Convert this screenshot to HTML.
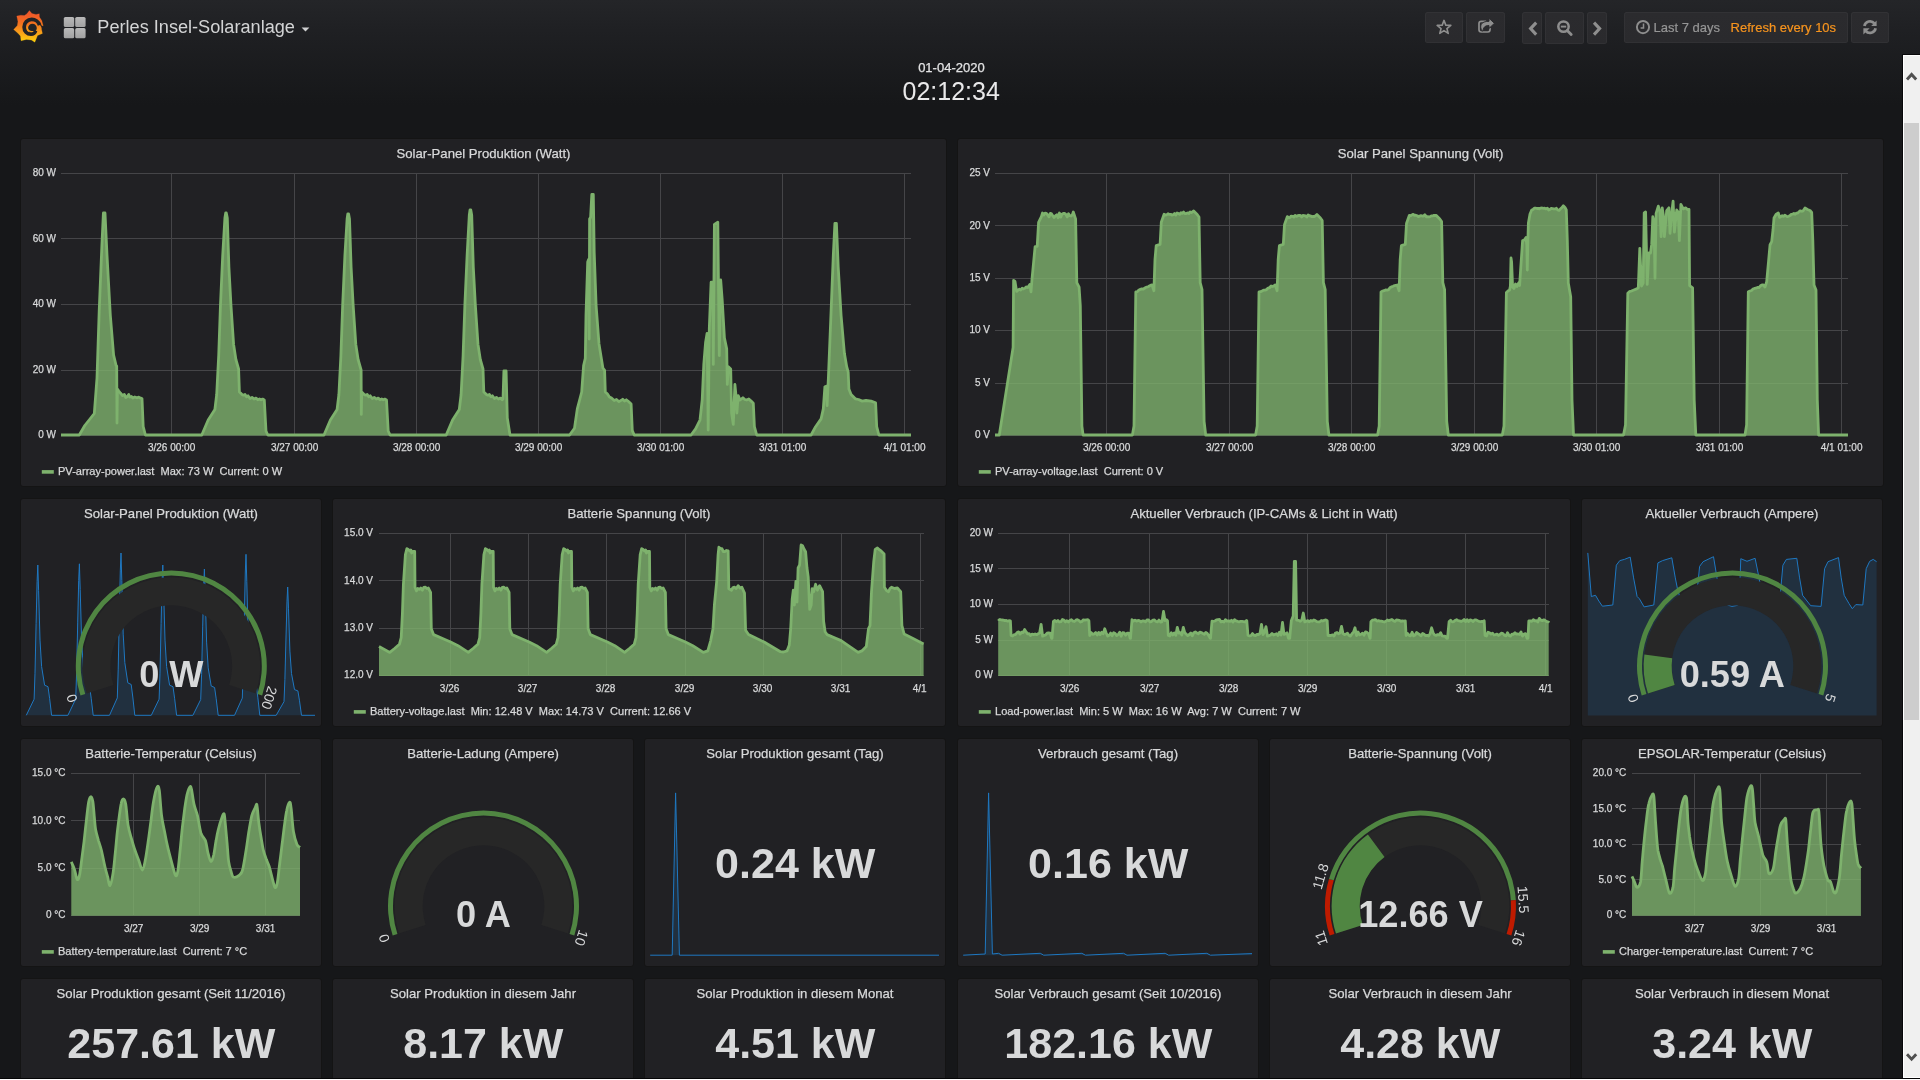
<!DOCTYPE html>
<html><head><meta charset="utf-8"><title>Perles Insel-Solaranlage</title>
<style>
html,body{margin:0;padding:0}
html{overflow:hidden}
body{width:1920px;height:1080px;overflow:hidden;position:relative;background:#161719;font-family:"Liberation Sans",sans-serif;}
#w{position:absolute;left:0;top:0;width:1920px;height:1080px;overflow:hidden}
#bg{position:absolute;left:0;top:0;width:1920px;height:140px;background:linear-gradient(to bottom,#242528 0,#1f2023 30px,#161719 105px)}
.p{position:absolute;background:#212124;border-radius:3px;border:1px solid #141414;box-sizing:border-box}
.t{position:absolute;white-space:pre;font-family:"Liberation Sans",sans-serif}
#tx{position:absolute;left:0;top:0;width:1920px;height:1080px;will-change:transform}
#g{position:absolute;left:0;top:0;will-change:transform}
.b{position:absolute;border-radius:2.5px;background:linear-gradient(to bottom,#2b2b2e,#2a2a2d);box-shadow:inset 0 0 0 1px rgba(255,255,255,0.035)}
#sb{position:absolute;left:1903px;top:55px;width:17px;height:1023px;background:#f0f0f0;border-left:1px solid #fff;border-bottom:1px solid #fff;border-top:1px solid #fff;box-sizing:border-box}
#tl{position:absolute;left:1902px;top:54px;width:18px;height:1px;background:#08080a}
#th{position:absolute;left:1904px;top:123px;width:15px;height:597px;background:#cdcdcd}
#vl{position:absolute;left:1902px;top:55px;width:1px;height:1023px;background:#08080a}
#bl{position:absolute;left:0;top:1078px;width:1920px;height:1px;background:#050506}
#wl{position:absolute;left:0;top:1079px;width:1920px;height:1px;background:#fff}
</style></head>
<body>
<div id="w">
<div id="bg"></div>
<div class="p" style="left:20px;top:138px;width:927px;height:349px"></div>
<div class="p" style="left:957px;top:138px;width:927px;height:349px"></div>
<div class="p" style="left:20px;top:498px;width:302px;height:229px"></div>
<div class="p" style="left:332px;top:498px;width:614px;height:229px"></div>
<div class="p" style="left:957px;top:498px;width:614px;height:229px"></div>
<div class="p" style="left:1581px;top:498px;width:302px;height:229px"></div>
<div class="p" style="left:20px;top:738px;width:302px;height:229px"></div>
<div class="p" style="left:332px;top:738px;width:302px;height:229px"></div>
<div class="p" style="left:644px;top:738px;width:302px;height:229px"></div>
<div class="p" style="left:957px;top:738px;width:302px;height:229px"></div>
<div class="p" style="left:1269px;top:738px;width:302px;height:229px"></div>
<div class="p" style="left:1581px;top:738px;width:302px;height:229px"></div>
<div class="p" style="left:20px;top:978px;width:302px;height:122px"></div>
<div class="p" style="left:332px;top:978px;width:302px;height:122px"></div>
<div class="p" style="left:644px;top:978px;width:302px;height:122px"></div>
<div class="p" style="left:957px;top:978px;width:302px;height:122px"></div>
<div class="p" style="left:1269px;top:978px;width:302px;height:122px"></div>
<div class="p" style="left:1581px;top:978px;width:302px;height:122px"></div>
<svg id="g" width="1920" height="1080" viewBox="0 0 1920 1080">
<path d="M61 173.5H911M61 238.5H911M61 304.5H911M61 370.5H911M61 435.5H911M171.5 173V435M294.5 173V435M416.5 173V435M538.5 173V435M660.5 173V435M782.5 173V435M904.5 173V435" stroke="#454548" stroke-width="1" fill="none" shape-rendering="crispEdges"/>
<path d="M61 435 L79.3 435 L84.8 425.5 L94.3 413.5 L97 378 L99.2 311 L101.9 245 L103.4 213 L105 213 L107 255 L110.3 315 L113.6 355 L116.1 365.5 L116.7 366 L117 423 L117.4 389 L118.8 391 L120.3 393 L122.5 395.5 L124.3 394.5 L125.8 397.5 L127.3 396.5 L128.7 394.5 L129.8 397 L131.4 396.5 L132.8 398 L134.8 397 L136.8 397.8 L138.8 397.2 L140.8 398.2 L142 398.5 L143.2 426.5 L145.4 435 L201.8 435 L208.2 420 L214.9 409.5 L216.7 394.5 L218.7 355.6 L220.5 304.4 L222.7 255.6 L224.9 218 L225.7 213 L226.3 213 L227.3 218 L228.9 267 L230.9 304.4 L233.6 344.4 L235.9 359.5 L238.6 369 L239.4 392 L240.5 393 L242 394.5 L243.4 395.2 L245 394.4 L246.5 396.8 L248 395.8 L250 398.5 L252 397.4 L254 399 L256 398.1 L257.8 399.8 L259.5 399 L261 399.8 L262.6 399.1 L264.3 400 L266 431 L267.8 435 L324 435 L330.4 420 L337.1 409.5 L338.9 394.5 L340.9 355.6 L342.7 304.4 L344.9 255.6 L347.1 219 L347.8 214 L348.6 214 L349.5 219 L351.1 267 L353.1 304.4 L355.8 344.4 L358.1 359.5 L360.8 369 L361.1 370 L361.3 414.4 L361.7 392 L362.7 393 L364.2 394.5 L365.6 395.2 L367.2 394.4 L368.7 396.8 L370.2 395.8 L372.2 398.5 L374.2 397.4 L376.2 399 L378.2 398.1 L380 399.8 L381.7 399 L383.2 399.8 L384.8 399.1 L386.5 400 L388.2 431 L390 435 L446.2 435 L452.6 420 L459.3 409.5 L461.1 394.5 L463.1 355.6 L464.9 304.4 L467.1 255.6 L469.3 215 L470 210 L470.8 210 L471.7 215 L473.3 267 L475.3 304.4 L478 344.4 L480.3 359.5 L483 369 L483.8 392 L484.9 393 L486.4 394.5 L487.8 395.2 L489.4 394.4 L490.9 396.8 L492.4 395.8 L494.4 398.5 L496.4 397.4 L498.4 399 L500.4 398.1 L502.2 399.8 L503 399 L503.9 371 L506.1 371 L507.3 418 L510 435 L569.6 435 L574.5 428.2 L577.3 408.9 L581.7 392 L583.6 365.5 L585.3 358.3 L586 315 L587.7 262 L588.6 259.5 L589.2 339 L589.6 219 L590.6 217.3 L591.8 194.5 L593.3 194.5 L594.2 252.3 L596.1 305.3 L599 343.9 L602.9 368 L604.6 370.4 L605.3 392 L607.5 394 L609.4 396.9 L611.5 398 L614.2 400.5 L616.5 399.5 L619 401.7 L622.7 399.3 L624.5 401 L626.3 399.8 L628.5 401.5 L631.1 404.1 L632.3 430.6 L634.2 435 L691.1 435 L695.6 428.9 L700 420 L702.2 400 L703.8 364.4 L705.6 342.2 L707.1 333.3 L708.2 430 L709.3 328.9 L711.1 282.2 L712.7 282.2 L713.3 364.4 L714.4 224.4 L717.8 222.2 L718.4 277.8 L719.3 355.6 L720.7 280 L722.2 300 L724.4 337.8 L726.7 348.9 L727.3 384.4 L728.4 366.7 L730.7 368.9 L731.6 413.3 L733.3 424.4 L734.9 384.4 L736 395.6 L736.9 413 L738.2 395.6 L740 400 L742.9 397.8 L744.8 399.5 L746.7 400 L748.8 399 L751.1 401.1 L753.3 403.3 L754.4 426.7 L756.7 435 L811.1 435 L815.6 426.7 L821.1 418.9 L823.3 408.9 L824.9 386.7 L826.2 386.2 L827.1 405.6 L828.4 377.8 L831.1 311.1 L833.3 255.6 L834.9 223.3 L836.4 223.3 L838.2 266.7 L841.1 315.6 L844.4 353.3 L846.7 366.7 L848.2 372.2 L848.9 388.9 L851.1 394.4 L855.6 398.9 L858.5 399.5 L862.2 401.1 L866 400.5 L871.1 401.1 L875.6 402.7 L876.7 426.7 L878.9 435 L911 435 L911 435.5 L61 435.5 Z" fill="rgba(126,178,109,0.8)" stroke="none"/>
<path d="M61 435 L79.3 435 L84.8 425.5 L94.3 413.5 L97 378 L99.2 311 L101.9 245 L103.4 213 L105 213 L107 255 L110.3 315 L113.6 355 L116.1 365.5 L116.7 366 L117 423 L117.4 389 L118.8 391 L120.3 393 L122.5 395.5 L124.3 394.5 L125.8 397.5 L127.3 396.5 L128.7 394.5 L129.8 397 L131.4 396.5 L132.8 398 L134.8 397 L136.8 397.8 L138.8 397.2 L140.8 398.2 L142 398.5 L143.2 426.5 L145.4 435 L201.8 435 L208.2 420 L214.9 409.5 L216.7 394.5 L218.7 355.6 L220.5 304.4 L222.7 255.6 L224.9 218 L225.7 213 L226.3 213 L227.3 218 L228.9 267 L230.9 304.4 L233.6 344.4 L235.9 359.5 L238.6 369 L239.4 392 L240.5 393 L242 394.5 L243.4 395.2 L245 394.4 L246.5 396.8 L248 395.8 L250 398.5 L252 397.4 L254 399 L256 398.1 L257.8 399.8 L259.5 399 L261 399.8 L262.6 399.1 L264.3 400 L266 431 L267.8 435 L324 435 L330.4 420 L337.1 409.5 L338.9 394.5 L340.9 355.6 L342.7 304.4 L344.9 255.6 L347.1 219 L347.8 214 L348.6 214 L349.5 219 L351.1 267 L353.1 304.4 L355.8 344.4 L358.1 359.5 L360.8 369 L361.1 370 L361.3 414.4 L361.7 392 L362.7 393 L364.2 394.5 L365.6 395.2 L367.2 394.4 L368.7 396.8 L370.2 395.8 L372.2 398.5 L374.2 397.4 L376.2 399 L378.2 398.1 L380 399.8 L381.7 399 L383.2 399.8 L384.8 399.1 L386.5 400 L388.2 431 L390 435 L446.2 435 L452.6 420 L459.3 409.5 L461.1 394.5 L463.1 355.6 L464.9 304.4 L467.1 255.6 L469.3 215 L470 210 L470.8 210 L471.7 215 L473.3 267 L475.3 304.4 L478 344.4 L480.3 359.5 L483 369 L483.8 392 L484.9 393 L486.4 394.5 L487.8 395.2 L489.4 394.4 L490.9 396.8 L492.4 395.8 L494.4 398.5 L496.4 397.4 L498.4 399 L500.4 398.1 L502.2 399.8 L503 399 L503.9 371 L506.1 371 L507.3 418 L510 435 L569.6 435 L574.5 428.2 L577.3 408.9 L581.7 392 L583.6 365.5 L585.3 358.3 L586 315 L587.7 262 L588.6 259.5 L589.2 339 L589.6 219 L590.6 217.3 L591.8 194.5 L593.3 194.5 L594.2 252.3 L596.1 305.3 L599 343.9 L602.9 368 L604.6 370.4 L605.3 392 L607.5 394 L609.4 396.9 L611.5 398 L614.2 400.5 L616.5 399.5 L619 401.7 L622.7 399.3 L624.5 401 L626.3 399.8 L628.5 401.5 L631.1 404.1 L632.3 430.6 L634.2 435 L691.1 435 L695.6 428.9 L700 420 L702.2 400 L703.8 364.4 L705.6 342.2 L707.1 333.3 L708.2 430 L709.3 328.9 L711.1 282.2 L712.7 282.2 L713.3 364.4 L714.4 224.4 L717.8 222.2 L718.4 277.8 L719.3 355.6 L720.7 280 L722.2 300 L724.4 337.8 L726.7 348.9 L727.3 384.4 L728.4 366.7 L730.7 368.9 L731.6 413.3 L733.3 424.4 L734.9 384.4 L736 395.6 L736.9 413 L738.2 395.6 L740 400 L742.9 397.8 L744.8 399.5 L746.7 400 L748.8 399 L751.1 401.1 L753.3 403.3 L754.4 426.7 L756.7 435 L811.1 435 L815.6 426.7 L821.1 418.9 L823.3 408.9 L824.9 386.7 L826.2 386.2 L827.1 405.6 L828.4 377.8 L831.1 311.1 L833.3 255.6 L834.9 223.3 L836.4 223.3 L838.2 266.7 L841.1 315.6 L844.4 353.3 L846.7 366.7 L848.2 372.2 L848.9 388.9 L851.1 394.4 L855.6 398.9 L858.5 399.5 L862.2 401.1 L866 400.5 L871.1 401.1 L875.6 402.7 L876.7 426.7 L878.9 435 L911 435" fill="none" stroke="#7eb26d" stroke-width="2.8" stroke-linejoin="round" stroke-linecap="butt"/>
<rect x="41.8" y="470.1" width="12" height="3.6" fill="#7eb26d"/>
<path d="M995 173.5H1848M995 225.5H1848M995 278.5H1848M995 330.5H1848M995 383.5H1848M995 435.5H1848M1106.5 173V435M1229.5 173V435M1351.5 173V435M1474.5 173V435M1596.5 173V435M1719.5 173V435M1841.5 173V435" stroke="#454548" stroke-width="1" fill="none" shape-rendering="crispEdges"/>
<path d="M995 435 L999.3 435 L1013.1 347.4 L1013.6 280.3 L1015 281.4 L1016.6 291.4 L1018 290.1 L1019.4 289.2 L1020.8 290 L1022.2 288.2 L1023.6 288.9 L1025 288.1 L1026.4 286.9 L1027.8 287.6 L1029.8 284.4 L1031 291.9 L1032.1 278 L1035.1 246.7 L1037.2 246.3 L1038.6 222.4 L1041.4 216.6 L1042.5 213 L1043.8 215 L1045.1 213.1 L1046.4 213.3 L1047.7 214.9 L1049 216.9 L1050.3 213.4 L1051.6 213.9 L1052.9 215.9 L1054.2 217.5 L1055.5 215.7 L1056.8 214.8 L1058.1 217.7 L1059.4 213 L1060.7 217.1 L1062 214.2 L1063.3 213.5 L1064.6 213.4 L1065.9 214.3 L1067.2 216.9 L1068.5 213.7 L1069.8 215.7 L1071.1 216 L1072.4 214.7 L1073.3 212 L1075.6 218.9 L1076.8 282.6 L1079.1 287.2 L1080.3 305.7 L1081.9 426.1 L1083.1 435 L1132.4 435 L1134 426 L1135.8 291.9 L1137.4 291.6 L1138.9 290 L1140.4 289.4 L1141.9 288.9 L1143.4 289.1 L1144.9 288 L1146.4 287.1 L1147.9 286.9 L1149.4 286 L1150.9 285.1 L1152 284.9 L1153.9 290.7 L1155 259.4 L1156.2 245.6 L1160.1 244.4 L1161.3 222.3 L1164.1 214.3 L1165.4 215 L1166.7 214.8 L1168 213.7 L1169.3 214.4 L1170.6 214.3 L1171.9 215.1 L1173.2 214.7 L1174.5 213.5 L1175.8 215.1 L1177.1 213 L1178.4 213.6 L1179.7 214.3 L1181 212.7 L1182.3 213.4 L1183.6 212.1 L1184.9 213.5 L1186.2 213.6 L1187.5 212.9 L1188.8 213.5 L1190.1 211.9 L1191.4 212.6 L1193.7 211 L1197.2 214.5 L1199 217 L1200.2 282.6 L1202 289.5 L1204.1 421.5 L1205.7 435 L1255.6 435 L1257.2 426 L1259 291.9 L1260.6 291.7 L1262.1 291 L1263.6 290.1 L1265.1 290.1 L1266.6 289.6 L1268.1 288.1 L1269.6 287.7 L1271.1 286 L1272.6 286.5 L1274.1 285.7 L1275.2 284.9 L1277.1 290.7 L1278.2 259.4 L1279.4 245.6 L1283.3 244.4 L1284.5 224.6 L1287.3 216.6 L1288.6 217.8 L1289.9 217.4 L1291.2 216.1 L1292.5 216.3 L1293.8 217 L1295.1 215.4 L1296.4 216.4 L1297.7 215.7 L1299 215.5 L1300.3 215.3 L1301.6 217 L1302.9 215.4 L1304.2 215.6 L1305.5 215.9 L1306.8 217 L1308.1 215 L1309.4 215.8 L1310.7 216 L1312 216.7 L1313.3 216.4 L1314.6 216.5 L1316.9 214.5 L1320.4 218 L1322.2 220.5 L1323.4 282.6 L1325.2 289.5 L1327.3 421.5 L1328.9 435 L1377.6 435 L1379.2 426 L1381 291.9 L1382.6 291.1 L1384.1 290.7 L1385.6 289.9 L1387.1 290.2 L1388.6 289.6 L1390.1 287.5 L1391.6 286.9 L1393.1 286.3 L1394.6 285.6 L1396.1 285.4 L1397.2 284.9 L1399.1 290.7 L1400.2 259.4 L1401.4 245.6 L1405.3 244.4 L1406.5 223.5 L1409.3 215.5 L1410.6 215.7 L1411.9 214.9 L1413.2 214.3 L1414.5 215.3 L1415.8 215.2 L1417.1 215.7 L1418.4 216.7 L1419.7 216.1 L1421 215.7 L1422.3 216 L1423.6 216.2 L1424.9 214.7 L1426.2 216.8 L1427.5 216.6 L1428.8 216.9 L1430.1 216.7 L1431.4 215.8 L1432.7 215.9 L1434 215.3 L1436.3 215.5 L1439.8 219 L1441.6 221.5 L1442.8 282.6 L1444.6 289.5 L1446.7 421.5 L1448.3 435 L1502.3 435 L1504 426 L1506.4 292.5 L1508 291 L1509.6 290 L1510.4 286 L1511 258 L1511.6 262 L1512.6 287 L1514 288.5 L1515.5 284 L1517 286.5 L1518.6 283 L1519.6 285.5 L1520.6 270 L1522.6 240.5 L1524.3 240 L1526 237.5 L1526.8 245 L1527.3 270 L1527.9 240 L1528.4 223 L1530 214 L1531.7 210 L1533 209.5 L1534.3 208.1 L1535.6 208.2 L1536.9 208.5 L1538.2 208.4 L1539.5 208.8 L1540.8 208.1 L1542.1 208 L1543.4 208.4 L1544.7 208.2 L1546 208.9 L1547.3 208.1 L1548.6 210.1 L1549.9 209.5 L1551.2 208.4 L1552.5 208.6 L1553.8 208.8 L1555.1 208.9 L1556.4 208.3 L1557.7 210 L1559 210.4 L1560.3 209.1 L1562 207.5 L1563.3 205.8 L1565 207.5 L1566.3 210 L1567.3 240 L1568.3 283 L1570.7 296.7 L1572 400 L1573.5 435 L1623.5 435 L1625.5 425 L1627.8 293.3 L1629.4 291.7 L1631.5 291 L1633.9 290 L1636.7 288.9 L1638.3 287.8 L1639.8 248.3 L1641.5 286 L1643.2 283 L1644.2 213 L1645.6 212 L1647.2 284.4 L1648.9 252.8 L1650.5 253 L1651.7 244.4 L1652.8 216.7 L1654 222 L1655 278.3 L1656.1 213.3 L1658.3 206.1 L1660 212 L1661.1 236.7 L1662.2 207.8 L1663.3 215 L1664.4 236.7 L1666.7 210.6 L1668.9 207.8 L1670 233.3 L1671.5 215 L1673.1 201.1 L1674.4 232.2 L1676.7 210 L1678.2 212 L1679.4 240.6 L1680.9 204.4 L1683.3 208.9 L1685.6 207.8 L1687.4 209.5 L1689 209.4 L1689.6 285.6 L1692.6 287.8 L1694.2 400 L1695.8 435 L1745 435 L1746.6 425 L1748.3 291.7 L1750 291 L1751.5 290.5 L1753 289.1 L1754.5 288.4 L1756 288.2 L1757.5 287.4 L1759 287.7 L1760.5 285.8 L1762 284.9 L1763.3 285 L1765 287 L1766.7 281.7 L1768.5 262 L1770 245 L1771.7 241.7 L1773 230 L1774 218 L1776 214.5 L1778.3 213 L1779.6 217.4 L1780.9 216.5 L1782.2 215.7 L1783.5 216.4 L1784.8 215.2 L1786.1 216.1 L1787.4 216.7 L1788.7 216.2 L1790 215.6 L1791.3 214.4 L1792.6 214.2 L1793.9 213.4 L1795.2 214.2 L1796.5 213.2 L1797.8 213.1 L1799.1 211.6 L1800.4 210.8 L1801.7 211.3 L1803 211 L1805 208 L1807.5 209.5 L1810 210.5 L1811.7 212.5 L1812.8 240 L1814 285 L1816 290 L1817.3 400 L1818.6 435 L1848 435 L1848 435.5 L995 435.5 Z" fill="rgba(126,178,109,0.8)" stroke="none"/>
<path d="M995 435 L999.3 435 L1013.1 347.4 L1013.6 280.3 L1015 281.4 L1016.6 291.4 L1018 290.1 L1019.4 289.2 L1020.8 290 L1022.2 288.2 L1023.6 288.9 L1025 288.1 L1026.4 286.9 L1027.8 287.6 L1029.8 284.4 L1031 291.9 L1032.1 278 L1035.1 246.7 L1037.2 246.3 L1038.6 222.4 L1041.4 216.6 L1042.5 213 L1043.8 215 L1045.1 213.1 L1046.4 213.3 L1047.7 214.9 L1049 216.9 L1050.3 213.4 L1051.6 213.9 L1052.9 215.9 L1054.2 217.5 L1055.5 215.7 L1056.8 214.8 L1058.1 217.7 L1059.4 213 L1060.7 217.1 L1062 214.2 L1063.3 213.5 L1064.6 213.4 L1065.9 214.3 L1067.2 216.9 L1068.5 213.7 L1069.8 215.7 L1071.1 216 L1072.4 214.7 L1073.3 212 L1075.6 218.9 L1076.8 282.6 L1079.1 287.2 L1080.3 305.7 L1081.9 426.1 L1083.1 435 L1132.4 435 L1134 426 L1135.8 291.9 L1137.4 291.6 L1138.9 290 L1140.4 289.4 L1141.9 288.9 L1143.4 289.1 L1144.9 288 L1146.4 287.1 L1147.9 286.9 L1149.4 286 L1150.9 285.1 L1152 284.9 L1153.9 290.7 L1155 259.4 L1156.2 245.6 L1160.1 244.4 L1161.3 222.3 L1164.1 214.3 L1165.4 215 L1166.7 214.8 L1168 213.7 L1169.3 214.4 L1170.6 214.3 L1171.9 215.1 L1173.2 214.7 L1174.5 213.5 L1175.8 215.1 L1177.1 213 L1178.4 213.6 L1179.7 214.3 L1181 212.7 L1182.3 213.4 L1183.6 212.1 L1184.9 213.5 L1186.2 213.6 L1187.5 212.9 L1188.8 213.5 L1190.1 211.9 L1191.4 212.6 L1193.7 211 L1197.2 214.5 L1199 217 L1200.2 282.6 L1202 289.5 L1204.1 421.5 L1205.7 435 L1255.6 435 L1257.2 426 L1259 291.9 L1260.6 291.7 L1262.1 291 L1263.6 290.1 L1265.1 290.1 L1266.6 289.6 L1268.1 288.1 L1269.6 287.7 L1271.1 286 L1272.6 286.5 L1274.1 285.7 L1275.2 284.9 L1277.1 290.7 L1278.2 259.4 L1279.4 245.6 L1283.3 244.4 L1284.5 224.6 L1287.3 216.6 L1288.6 217.8 L1289.9 217.4 L1291.2 216.1 L1292.5 216.3 L1293.8 217 L1295.1 215.4 L1296.4 216.4 L1297.7 215.7 L1299 215.5 L1300.3 215.3 L1301.6 217 L1302.9 215.4 L1304.2 215.6 L1305.5 215.9 L1306.8 217 L1308.1 215 L1309.4 215.8 L1310.7 216 L1312 216.7 L1313.3 216.4 L1314.6 216.5 L1316.9 214.5 L1320.4 218 L1322.2 220.5 L1323.4 282.6 L1325.2 289.5 L1327.3 421.5 L1328.9 435 L1377.6 435 L1379.2 426 L1381 291.9 L1382.6 291.1 L1384.1 290.7 L1385.6 289.9 L1387.1 290.2 L1388.6 289.6 L1390.1 287.5 L1391.6 286.9 L1393.1 286.3 L1394.6 285.6 L1396.1 285.4 L1397.2 284.9 L1399.1 290.7 L1400.2 259.4 L1401.4 245.6 L1405.3 244.4 L1406.5 223.5 L1409.3 215.5 L1410.6 215.7 L1411.9 214.9 L1413.2 214.3 L1414.5 215.3 L1415.8 215.2 L1417.1 215.7 L1418.4 216.7 L1419.7 216.1 L1421 215.7 L1422.3 216 L1423.6 216.2 L1424.9 214.7 L1426.2 216.8 L1427.5 216.6 L1428.8 216.9 L1430.1 216.7 L1431.4 215.8 L1432.7 215.9 L1434 215.3 L1436.3 215.5 L1439.8 219 L1441.6 221.5 L1442.8 282.6 L1444.6 289.5 L1446.7 421.5 L1448.3 435 L1502.3 435 L1504 426 L1506.4 292.5 L1508 291 L1509.6 290 L1510.4 286 L1511 258 L1511.6 262 L1512.6 287 L1514 288.5 L1515.5 284 L1517 286.5 L1518.6 283 L1519.6 285.5 L1520.6 270 L1522.6 240.5 L1524.3 240 L1526 237.5 L1526.8 245 L1527.3 270 L1527.9 240 L1528.4 223 L1530 214 L1531.7 210 L1533 209.5 L1534.3 208.1 L1535.6 208.2 L1536.9 208.5 L1538.2 208.4 L1539.5 208.8 L1540.8 208.1 L1542.1 208 L1543.4 208.4 L1544.7 208.2 L1546 208.9 L1547.3 208.1 L1548.6 210.1 L1549.9 209.5 L1551.2 208.4 L1552.5 208.6 L1553.8 208.8 L1555.1 208.9 L1556.4 208.3 L1557.7 210 L1559 210.4 L1560.3 209.1 L1562 207.5 L1563.3 205.8 L1565 207.5 L1566.3 210 L1567.3 240 L1568.3 283 L1570.7 296.7 L1572 400 L1573.5 435 L1623.5 435 L1625.5 425 L1627.8 293.3 L1629.4 291.7 L1631.5 291 L1633.9 290 L1636.7 288.9 L1638.3 287.8 L1639.8 248.3 L1641.5 286 L1643.2 283 L1644.2 213 L1645.6 212 L1647.2 284.4 L1648.9 252.8 L1650.5 253 L1651.7 244.4 L1652.8 216.7 L1654 222 L1655 278.3 L1656.1 213.3 L1658.3 206.1 L1660 212 L1661.1 236.7 L1662.2 207.8 L1663.3 215 L1664.4 236.7 L1666.7 210.6 L1668.9 207.8 L1670 233.3 L1671.5 215 L1673.1 201.1 L1674.4 232.2 L1676.7 210 L1678.2 212 L1679.4 240.6 L1680.9 204.4 L1683.3 208.9 L1685.6 207.8 L1687.4 209.5 L1689 209.4 L1689.6 285.6 L1692.6 287.8 L1694.2 400 L1695.8 435 L1745 435 L1746.6 425 L1748.3 291.7 L1750 291 L1751.5 290.5 L1753 289.1 L1754.5 288.4 L1756 288.2 L1757.5 287.4 L1759 287.7 L1760.5 285.8 L1762 284.9 L1763.3 285 L1765 287 L1766.7 281.7 L1768.5 262 L1770 245 L1771.7 241.7 L1773 230 L1774 218 L1776 214.5 L1778.3 213 L1779.6 217.4 L1780.9 216.5 L1782.2 215.7 L1783.5 216.4 L1784.8 215.2 L1786.1 216.1 L1787.4 216.7 L1788.7 216.2 L1790 215.6 L1791.3 214.4 L1792.6 214.2 L1793.9 213.4 L1795.2 214.2 L1796.5 213.2 L1797.8 213.1 L1799.1 211.6 L1800.4 210.8 L1801.7 211.3 L1803 211 L1805 208 L1807.5 209.5 L1810 210.5 L1811.7 212.5 L1812.8 240 L1814 285 L1816 290 L1817.3 400 L1818.6 435 L1848 435" fill="none" stroke="#7eb26d" stroke-width="2.8" stroke-linejoin="round" stroke-linecap="butt"/>
<rect x="978.8" y="470.1" width="12" height="3.6" fill="#7eb26d"/>
<path d="M379 533.5H924M379 580.5H924M379 628.5H924M379 675.5H924M450.5 533V675.5M528.5 533V675.5M606.5 533V675.5M685.5 533V675.5M763.5 533V675.5M841.5 533V675.5M920.5 533V675.5" stroke="#454548" stroke-width="1" fill="none" shape-rendering="crispEdges"/>
<path d="M379 646.5 L389.8 652.4 L394.6 648.5 L399.4 644.3 L401.2 637.6 L402.4 613.9 L403.4 584.3 L405.4 554.6 L406.9 548.7 L408.3 549.5 L409.8 551 L410.8 550 L411.7 553 L412.8 551.4 L414.7 551.4 L415 587.2 L416.5 590.9 L417.8 588.5 L419.4 589.4 L420.8 588 L422.4 590.2 L423.8 587.5 L425.4 587.2 L426.8 588.5 L428.3 588 L430.6 592.4 L431.3 628.7 L433.5 634.6 L450.6 642 L458 645.7 L468.3 652.4 L473.1 648.5 L477.9 644.3 L479.7 637.6 L480.9 613.9 L481.9 584.3 L483.9 554.6 L485.4 548.7 L486.8 549.5 L488.3 551 L489.3 550 L490.2 553 L491.3 551.4 L493.2 551.4 L493.5 587.2 L495 590.9 L496.3 588.5 L497.9 589.4 L499.3 588 L500.9 590.2 L502.3 587.5 L503.9 587.2 L505.3 588.5 L506.8 588 L509.1 592.4 L509.8 628.7 L512 634.6 L529.1 642 L536.5 645.7 L546.6 652.4 L551.4 648.5 L556.2 644.3 L558 637.6 L559.2 613.9 L560.2 584.3 L562.2 554.6 L563.7 548.7 L565.1 549.5 L566.6 551 L567.6 550 L568.5 553 L569.6 551.4 L571.5 551.4 L571.8 587.2 L573.3 590.9 L574.6 588.5 L576.2 589.4 L577.6 588 L579.2 590.2 L580.6 587.5 L582.2 587.2 L583.6 588.5 L585.1 588 L587.4 592.4 L588.1 628.7 L590.3 634.6 L607.4 642 L614.8 645.7 L624.6 652.4 L629.4 648.5 L634.2 644.3 L636 637.6 L637.2 613.9 L638.2 584.3 L640.2 554.6 L641.7 548.7 L643.1 549.5 L644.6 551 L645.6 550 L646.5 553 L647.6 551.4 L649.5 551.4 L649.8 587.2 L651.3 590.9 L652.6 588.5 L654.2 589.4 L655.6 588 L657.2 590.2 L658.6 587.5 L660.2 587.2 L661.6 588.5 L663.1 588 L665.4 592.4 L666.1 628.7 L668.3 634.6 L685.4 642 L692.8 645.7 L703.3 652.4 L707.8 650.9 L710.7 640.6 L713 628.7 L714.4 605 L716.7 581.3 L718.1 554.6 L718.9 547.2 L720.4 548.5 L721.9 548.7 L723.3 551.5 L724.8 551.7 L726.5 550.5 L728.2 550.9 L728.8 588.7 L731.5 590.2 L733 587.5 L734.4 587.2 L736.2 588.5 L738.1 585.7 L740 588 L741.9 587.2 L744.5 593.1 L745.6 630.2 L748.5 634.6 L764.1 642 L780.4 651.7 L783.5 652 L787 650.9 L789.3 645 L790.7 628.7 L792.2 599.1 L793.3 590.2 L794.4 605 L795.9 581.3 L797 602 L798.1 568 L799.6 565 L801.1 545 L802.6 545.7 L804 549 L805.6 551.7 L807 568 L808.2 576.9 L809.7 609.4 L811.2 605 L812.2 588.7 L813.7 591.7 L815.6 584.3 L817.4 590.2 L819.6 585.7 L822.6 591.7 L823.6 621.3 L825.1 631.7 L827 634.6 L841.1 640.6 L858.1 652.4 L861.9 650.9 L866.3 646.5 L868.5 628.7 L870 625.7 L871.5 591.7 L873.7 562 L875.2 549.4 L877.4 548 L879 549.5 L881.1 550.9 L884.1 553.9 L884.4 587.2 L886.5 590.5 L888.5 591.7 L890 588.5 L891.5 587.2 L894.5 588.5 L897.4 588 L900.7 591.7 L901.9 625.7 L904.1 633.9 L914 639 L923.6 644 L923.6 676 L379 676 Z" fill="rgba(126,178,109,0.8)" stroke="none"/>
<path d="M379 646.5 L389.8 652.4 L394.6 648.5 L399.4 644.3 L401.2 637.6 L402.4 613.9 L403.4 584.3 L405.4 554.6 L406.9 548.7 L408.3 549.5 L409.8 551 L410.8 550 L411.7 553 L412.8 551.4 L414.7 551.4 L415 587.2 L416.5 590.9 L417.8 588.5 L419.4 589.4 L420.8 588 L422.4 590.2 L423.8 587.5 L425.4 587.2 L426.8 588.5 L428.3 588 L430.6 592.4 L431.3 628.7 L433.5 634.6 L450.6 642 L458 645.7 L468.3 652.4 L473.1 648.5 L477.9 644.3 L479.7 637.6 L480.9 613.9 L481.9 584.3 L483.9 554.6 L485.4 548.7 L486.8 549.5 L488.3 551 L489.3 550 L490.2 553 L491.3 551.4 L493.2 551.4 L493.5 587.2 L495 590.9 L496.3 588.5 L497.9 589.4 L499.3 588 L500.9 590.2 L502.3 587.5 L503.9 587.2 L505.3 588.5 L506.8 588 L509.1 592.4 L509.8 628.7 L512 634.6 L529.1 642 L536.5 645.7 L546.6 652.4 L551.4 648.5 L556.2 644.3 L558 637.6 L559.2 613.9 L560.2 584.3 L562.2 554.6 L563.7 548.7 L565.1 549.5 L566.6 551 L567.6 550 L568.5 553 L569.6 551.4 L571.5 551.4 L571.8 587.2 L573.3 590.9 L574.6 588.5 L576.2 589.4 L577.6 588 L579.2 590.2 L580.6 587.5 L582.2 587.2 L583.6 588.5 L585.1 588 L587.4 592.4 L588.1 628.7 L590.3 634.6 L607.4 642 L614.8 645.7 L624.6 652.4 L629.4 648.5 L634.2 644.3 L636 637.6 L637.2 613.9 L638.2 584.3 L640.2 554.6 L641.7 548.7 L643.1 549.5 L644.6 551 L645.6 550 L646.5 553 L647.6 551.4 L649.5 551.4 L649.8 587.2 L651.3 590.9 L652.6 588.5 L654.2 589.4 L655.6 588 L657.2 590.2 L658.6 587.5 L660.2 587.2 L661.6 588.5 L663.1 588 L665.4 592.4 L666.1 628.7 L668.3 634.6 L685.4 642 L692.8 645.7 L703.3 652.4 L707.8 650.9 L710.7 640.6 L713 628.7 L714.4 605 L716.7 581.3 L718.1 554.6 L718.9 547.2 L720.4 548.5 L721.9 548.7 L723.3 551.5 L724.8 551.7 L726.5 550.5 L728.2 550.9 L728.8 588.7 L731.5 590.2 L733 587.5 L734.4 587.2 L736.2 588.5 L738.1 585.7 L740 588 L741.9 587.2 L744.5 593.1 L745.6 630.2 L748.5 634.6 L764.1 642 L780.4 651.7 L783.5 652 L787 650.9 L789.3 645 L790.7 628.7 L792.2 599.1 L793.3 590.2 L794.4 605 L795.9 581.3 L797 602 L798.1 568 L799.6 565 L801.1 545 L802.6 545.7 L804 549 L805.6 551.7 L807 568 L808.2 576.9 L809.7 609.4 L811.2 605 L812.2 588.7 L813.7 591.7 L815.6 584.3 L817.4 590.2 L819.6 585.7 L822.6 591.7 L823.6 621.3 L825.1 631.7 L827 634.6 L841.1 640.6 L858.1 652.4 L861.9 650.9 L866.3 646.5 L868.5 628.7 L870 625.7 L871.5 591.7 L873.7 562 L875.2 549.4 L877.4 548 L879 549.5 L881.1 550.9 L884.1 553.9 L884.4 587.2 L886.5 590.5 L888.5 591.7 L890 588.5 L891.5 587.2 L894.5 588.5 L897.4 588 L900.7 591.7 L901.9 625.7 L904.1 633.9 L914 639 L923.6 644" fill="none" stroke="#7eb26d" stroke-width="2.8" stroke-linejoin="round" stroke-linecap="butt"/>
<rect x="353.8" y="710.1" width="12" height="3.6" fill="#7eb26d"/>
<path d="M998 533.5H1549M998 568.5H1549M998 604.5H1549M998 640.5H1549M998 675.5H1549M1069.5 533V675.5M1149.5 533V675.5M1228.5 533V675.5M1307.5 533V675.5M1386.5 533V675.5M1465.5 533V675.5M1545.5 533V675.5" stroke="#454548" stroke-width="1" fill="none" shape-rendering="crispEdges"/>
<path d="M998.2 619 L998.8 619.6 L1000.3 619.7 L1001.8 620 L1003.3 620.2 L1004.8 620.7 L1006.3 620.4 L1007.8 621.2 L1009.3 620.6 L1010.4 620.8 L1011.1 635.5 L1012.6 636 L1014.1 634.7 L1015.6 634.5 L1017.1 632.5 L1018.6 631.9 L1020.1 634.1 L1021.6 632.1 L1023.1 632.6 L1024.6 629.5 L1026.1 631.9 L1027.6 633.8 L1029.1 633.7 L1030.6 635.5 L1032.1 634.1 L1033.6 634.6 L1035.1 634 L1036.6 634.7 L1038.1 633.8 L1039.6 633 L1041.1 624.3 L1042.6 636.2 L1044.1 635.5 L1045.6 634.9 L1047.1 633.2 L1048.6 632.8 L1050.1 633.1 L1051.6 638.3 L1052 638.3 L1053.4 621.5 L1054.9 620.5 L1056.4 621.7 L1057.9 620.5 L1059.4 622 L1060.9 621.7 L1062.4 619.5 L1063.9 620 L1065.4 621.9 L1066.9 620.7 L1068.4 622 L1069.9 620.5 L1071.4 619.7 L1072.9 621.1 L1074.4 621.5 L1075.9 620.2 L1077.4 619.7 L1078.9 620.4 L1080.4 622 L1081.9 621.5 L1083.4 619.8 L1084.9 620.1 L1086.4 619.8 L1087.9 619.7 L1088.9 620.8 L1089.7 635.5 L1091.2 632.6 L1092.7 634.3 L1094.2 633.8 L1095.7 632.6 L1097.2 635 L1098.7 632.4 L1100.2 634.6 L1101.7 632.3 L1103.2 633.7 L1104.7 628.8 L1106.2 633 L1107.7 636.1 L1109.2 635.3 L1110.7 633.1 L1112.2 635.7 L1113.7 632.7 L1115.2 633.5 L1116.7 635.6 L1118.2 634.6 L1119.7 632.2 L1121.2 636.2 L1122.7 632.7 L1124.2 632.9 L1125.7 635.2 L1127.2 633.2 L1128.7 633.1 L1130.2 638.3 L1130.5 638.3 L1132 619.7 L1133.5 621 L1135 620.1 L1136.5 621.1 L1138 620.5 L1139.5 620.7 L1141 622 L1142.5 620.8 L1144 621 L1145.5 621.8 L1147 620 L1148.5 619.9 L1150 621.9 L1151.5 621.6 L1153 620.1 L1154.5 620 L1156 621.4 L1157.5 621.9 L1159 620 L1160.5 622 L1162 621.8 L1163.5 611.5 L1165 620.6 L1166.5 619.8 L1167.5 620.8 L1168.3 635.5 L1169.8 636 L1171.3 632.8 L1172.8 634.9 L1174.3 632.9 L1175.8 635.4 L1177.3 627.3 L1178.8 633.1 L1180.3 632.6 L1181.8 635 L1183.3 627.3 L1184.8 632.8 L1186.3 634.3 L1187.8 635.6 L1189.3 634.5 L1190.8 633 L1192.3 635.8 L1193.8 632.7 L1195.3 631.9 L1196.8 633 L1198.3 633.8 L1199.8 632.1 L1201.3 632.6 L1202.8 633.4 L1204.3 634.3 L1205.8 632.4 L1207.3 633.4 L1208.8 635.7 L1210.3 638.3 L1210.5 638.3 L1212 621.2 L1213.5 621.3 L1215 621 L1216.5 619.9 L1218 619.6 L1219.5 619.5 L1221 621.9 L1222.5 621.3 L1224 622 L1225.5 619.6 L1227 621.2 L1228.5 620.8 L1230 621.4 L1231.5 620.3 L1233 622.1 L1234.5 619.7 L1236 620.9 L1237.5 621.4 L1239 621.8 L1240.5 621.4 L1242 621.3 L1243.5 621.6 L1245 621.9 L1246.5 620.4 L1246.8 620.8 L1248 635.5 L1249.5 635.8 L1251 635.6 L1252.5 633.6 L1254 635.3 L1255.5 635.6 L1257 634.3 L1258.5 634.5 L1260 633.5 L1261.5 624.3 L1263 634.5 L1264.5 632.2 L1266 626.6 L1267.5 636.2 L1269 635.7 L1270.5 635 L1272 633.5 L1273.5 635 L1275 634.4 L1276.5 633.7 L1278 635.5 L1279.5 632.2 L1281 635.1 L1282.5 622.3 L1284 634.4 L1285.5 633.9 L1287 632.8 L1288.5 638.3 L1289.7 638.3 L1291.3 620.8 L1293.2 616.1 L1294.3 561.4 L1295.6 561.4 L1296.6 620 L1298.8 620.3 L1300.3 621.3 L1301.8 620 L1303.3 613 L1304.8 621.9 L1306.3 621.2 L1307.8 620.6 L1309.3 621.8 L1310.8 620.4 L1312.3 621.2 L1313.8 620 L1315.3 620.6 L1316.8 621.6 L1318.3 621.9 L1319.8 621.8 L1321.3 620.5 L1322.8 621 L1324.3 620.3 L1325.8 619.9 L1327.2 620.8 L1328 635.5 L1329.5 635.5 L1331 635.5 L1332.5 634.9 L1334 636 L1335.5 633 L1337 632.5 L1338.5 633.8 L1340 633 L1341.5 626.3 L1343 633.6 L1344.5 634.6 L1346 634 L1347.5 633.2 L1349 635.5 L1350.5 636.1 L1352 633.8 L1353.5 632.1 L1355 627.8 L1356.5 635.6 L1358 632 L1359.5 634.9 L1361 634.3 L1362.5 633.2 L1364 635.3 L1365.5 631.9 L1367 632.4 L1368.5 633.8 L1370 638.3 L1370.2 638.3 L1370.9 621.7 L1372.4 620.1 L1373.9 619.9 L1375.4 619.6 L1376.9 621.1 L1378.4 620.7 L1379.9 621.1 L1381.4 621.2 L1382.9 621.6 L1384.4 622 L1385.9 621.3 L1387.4 620 L1388.9 620.7 L1390.4 620 L1391.9 619.5 L1393.4 620.7 L1394.9 621.4 L1396.4 620 L1397.9 620.2 L1399.4 620.4 L1400.9 621.3 L1402.4 620.9 L1403.9 621.1 L1405.3 620.8 L1406.1 635.5 L1407.6 633.5 L1409.1 635.3 L1410.6 635.8 L1412.1 632.2 L1413.6 635.9 L1415.1 635 L1416.6 632.4 L1418.1 633.8 L1419.6 634.6 L1421.1 635.8 L1422.6 633.5 L1424.1 634.3 L1425.6 635.7 L1427.1 635.3 L1428.6 636 L1430.1 633.8 L1431.6 627.8 L1433.1 632.7 L1434.6 635 L1436.1 635.4 L1437.6 634.6 L1439.1 635 L1440.6 632.7 L1442.1 635.8 L1443.6 636.1 L1445.1 636.1 L1446.6 638.3 L1447.5 638.3 L1449.1 621.6 L1450.6 620.3 L1452.1 621.9 L1453.6 621.7 L1455.1 620.4 L1456.6 619.7 L1458.1 620.6 L1459.6 620.9 L1461.1 621.5 L1462.6 620.8 L1464.1 619.6 L1465.6 621.6 L1467.1 619.7 L1468.6 621.6 L1470.1 619.9 L1471.6 620.4 L1473.1 621.5 L1474.6 619.9 L1476.1 619.9 L1477.6 620.8 L1479.1 621.4 L1480.6 621.7 L1482.1 621.3 L1483.6 622 L1484.2 620.8 L1485 635.5 L1486.5 636 L1488 632.2 L1489.5 632.8 L1491 634.1 L1492.5 633.1 L1494 635 L1495.5 634.6 L1497 634.1 L1498.5 635.5 L1500 634.3 L1501.5 633.2 L1503 633.5 L1504.5 635.5 L1506 635.8 L1507.5 632.7 L1509 635.5 L1510.5 636.1 L1512 634.1 L1513.5 634.3 L1515 632.7 L1516.5 634.2 L1518 634 L1519.5 634.5 L1521 631.9 L1522.5 636.1 L1524 634.1 L1525.5 633.6 L1527 638.3 L1528 638.3 L1528.8 621 L1530.3 620.8 L1531.8 621.3 L1533.3 619.7 L1534.8 620.9 L1536.3 620.6 L1537.8 622 L1539.3 618.4 L1540.8 620.2 L1542.3 620.7 L1543.8 619.8 L1545.3 620.6 L1546.8 621.6 L1548.3 621.8 L1548.7 620.8 L1548.7 676 L998.2 676 Z" fill="rgba(126,178,109,0.8)" stroke="none"/>
<path d="M998.2 619 L998.8 619.6 L1000.3 619.7 L1001.8 620 L1003.3 620.2 L1004.8 620.7 L1006.3 620.4 L1007.8 621.2 L1009.3 620.6 L1010.4 620.8 L1011.1 635.5 L1012.6 636 L1014.1 634.7 L1015.6 634.5 L1017.1 632.5 L1018.6 631.9 L1020.1 634.1 L1021.6 632.1 L1023.1 632.6 L1024.6 629.5 L1026.1 631.9 L1027.6 633.8 L1029.1 633.7 L1030.6 635.5 L1032.1 634.1 L1033.6 634.6 L1035.1 634 L1036.6 634.7 L1038.1 633.8 L1039.6 633 L1041.1 624.3 L1042.6 636.2 L1044.1 635.5 L1045.6 634.9 L1047.1 633.2 L1048.6 632.8 L1050.1 633.1 L1051.6 638.3 L1052 638.3 L1053.4 621.5 L1054.9 620.5 L1056.4 621.7 L1057.9 620.5 L1059.4 622 L1060.9 621.7 L1062.4 619.5 L1063.9 620 L1065.4 621.9 L1066.9 620.7 L1068.4 622 L1069.9 620.5 L1071.4 619.7 L1072.9 621.1 L1074.4 621.5 L1075.9 620.2 L1077.4 619.7 L1078.9 620.4 L1080.4 622 L1081.9 621.5 L1083.4 619.8 L1084.9 620.1 L1086.4 619.8 L1087.9 619.7 L1088.9 620.8 L1089.7 635.5 L1091.2 632.6 L1092.7 634.3 L1094.2 633.8 L1095.7 632.6 L1097.2 635 L1098.7 632.4 L1100.2 634.6 L1101.7 632.3 L1103.2 633.7 L1104.7 628.8 L1106.2 633 L1107.7 636.1 L1109.2 635.3 L1110.7 633.1 L1112.2 635.7 L1113.7 632.7 L1115.2 633.5 L1116.7 635.6 L1118.2 634.6 L1119.7 632.2 L1121.2 636.2 L1122.7 632.7 L1124.2 632.9 L1125.7 635.2 L1127.2 633.2 L1128.7 633.1 L1130.2 638.3 L1130.5 638.3 L1132 619.7 L1133.5 621 L1135 620.1 L1136.5 621.1 L1138 620.5 L1139.5 620.7 L1141 622 L1142.5 620.8 L1144 621 L1145.5 621.8 L1147 620 L1148.5 619.9 L1150 621.9 L1151.5 621.6 L1153 620.1 L1154.5 620 L1156 621.4 L1157.5 621.9 L1159 620 L1160.5 622 L1162 621.8 L1163.5 611.5 L1165 620.6 L1166.5 619.8 L1167.5 620.8 L1168.3 635.5 L1169.8 636 L1171.3 632.8 L1172.8 634.9 L1174.3 632.9 L1175.8 635.4 L1177.3 627.3 L1178.8 633.1 L1180.3 632.6 L1181.8 635 L1183.3 627.3 L1184.8 632.8 L1186.3 634.3 L1187.8 635.6 L1189.3 634.5 L1190.8 633 L1192.3 635.8 L1193.8 632.7 L1195.3 631.9 L1196.8 633 L1198.3 633.8 L1199.8 632.1 L1201.3 632.6 L1202.8 633.4 L1204.3 634.3 L1205.8 632.4 L1207.3 633.4 L1208.8 635.7 L1210.3 638.3 L1210.5 638.3 L1212 621.2 L1213.5 621.3 L1215 621 L1216.5 619.9 L1218 619.6 L1219.5 619.5 L1221 621.9 L1222.5 621.3 L1224 622 L1225.5 619.6 L1227 621.2 L1228.5 620.8 L1230 621.4 L1231.5 620.3 L1233 622.1 L1234.5 619.7 L1236 620.9 L1237.5 621.4 L1239 621.8 L1240.5 621.4 L1242 621.3 L1243.5 621.6 L1245 621.9 L1246.5 620.4 L1246.8 620.8 L1248 635.5 L1249.5 635.8 L1251 635.6 L1252.5 633.6 L1254 635.3 L1255.5 635.6 L1257 634.3 L1258.5 634.5 L1260 633.5 L1261.5 624.3 L1263 634.5 L1264.5 632.2 L1266 626.6 L1267.5 636.2 L1269 635.7 L1270.5 635 L1272 633.5 L1273.5 635 L1275 634.4 L1276.5 633.7 L1278 635.5 L1279.5 632.2 L1281 635.1 L1282.5 622.3 L1284 634.4 L1285.5 633.9 L1287 632.8 L1288.5 638.3 L1289.7 638.3 L1291.3 620.8 L1293.2 616.1 L1294.3 561.4 L1295.6 561.4 L1296.6 620 L1298.8 620.3 L1300.3 621.3 L1301.8 620 L1303.3 613 L1304.8 621.9 L1306.3 621.2 L1307.8 620.6 L1309.3 621.8 L1310.8 620.4 L1312.3 621.2 L1313.8 620 L1315.3 620.6 L1316.8 621.6 L1318.3 621.9 L1319.8 621.8 L1321.3 620.5 L1322.8 621 L1324.3 620.3 L1325.8 619.9 L1327.2 620.8 L1328 635.5 L1329.5 635.5 L1331 635.5 L1332.5 634.9 L1334 636 L1335.5 633 L1337 632.5 L1338.5 633.8 L1340 633 L1341.5 626.3 L1343 633.6 L1344.5 634.6 L1346 634 L1347.5 633.2 L1349 635.5 L1350.5 636.1 L1352 633.8 L1353.5 632.1 L1355 627.8 L1356.5 635.6 L1358 632 L1359.5 634.9 L1361 634.3 L1362.5 633.2 L1364 635.3 L1365.5 631.9 L1367 632.4 L1368.5 633.8 L1370 638.3 L1370.2 638.3 L1370.9 621.7 L1372.4 620.1 L1373.9 619.9 L1375.4 619.6 L1376.9 621.1 L1378.4 620.7 L1379.9 621.1 L1381.4 621.2 L1382.9 621.6 L1384.4 622 L1385.9 621.3 L1387.4 620 L1388.9 620.7 L1390.4 620 L1391.9 619.5 L1393.4 620.7 L1394.9 621.4 L1396.4 620 L1397.9 620.2 L1399.4 620.4 L1400.9 621.3 L1402.4 620.9 L1403.9 621.1 L1405.3 620.8 L1406.1 635.5 L1407.6 633.5 L1409.1 635.3 L1410.6 635.8 L1412.1 632.2 L1413.6 635.9 L1415.1 635 L1416.6 632.4 L1418.1 633.8 L1419.6 634.6 L1421.1 635.8 L1422.6 633.5 L1424.1 634.3 L1425.6 635.7 L1427.1 635.3 L1428.6 636 L1430.1 633.8 L1431.6 627.8 L1433.1 632.7 L1434.6 635 L1436.1 635.4 L1437.6 634.6 L1439.1 635 L1440.6 632.7 L1442.1 635.8 L1443.6 636.1 L1445.1 636.1 L1446.6 638.3 L1447.5 638.3 L1449.1 621.6 L1450.6 620.3 L1452.1 621.9 L1453.6 621.7 L1455.1 620.4 L1456.6 619.7 L1458.1 620.6 L1459.6 620.9 L1461.1 621.5 L1462.6 620.8 L1464.1 619.6 L1465.6 621.6 L1467.1 619.7 L1468.6 621.6 L1470.1 619.9 L1471.6 620.4 L1473.1 621.5 L1474.6 619.9 L1476.1 619.9 L1477.6 620.8 L1479.1 621.4 L1480.6 621.7 L1482.1 621.3 L1483.6 622 L1484.2 620.8 L1485 635.5 L1486.5 636 L1488 632.2 L1489.5 632.8 L1491 634.1 L1492.5 633.1 L1494 635 L1495.5 634.6 L1497 634.1 L1498.5 635.5 L1500 634.3 L1501.5 633.2 L1503 633.5 L1504.5 635.5 L1506 635.8 L1507.5 632.7 L1509 635.5 L1510.5 636.1 L1512 634.1 L1513.5 634.3 L1515 632.7 L1516.5 634.2 L1518 634 L1519.5 634.5 L1521 631.9 L1522.5 636.1 L1524 634.1 L1525.5 633.6 L1527 638.3 L1528 638.3 L1528.8 621 L1530.3 620.8 L1531.8 621.3 L1533.3 619.7 L1534.8 620.9 L1536.3 620.6 L1537.8 622 L1539.3 618.4 L1540.8 620.2 L1542.3 620.7 L1543.8 619.8 L1545.3 620.6 L1546.8 621.6 L1548.3 621.8 L1548.7 620.8" fill="none" stroke="#7eb26d" stroke-width="2.8" stroke-linejoin="round" stroke-linecap="butt"/>
<rect x="978.8" y="710.1" width="12" height="3.6" fill="#7eb26d"/>
<path d="M71.3 773.5H300M71.3 820.5H300M71.3 868.5H300M71.3 915.5H300M133.5 773.3V915.2M199.5 773.3V915.2M265.5 773.3V915.2" stroke="#454548" stroke-width="1" fill="none" shape-rendering="crispEdges"/>
<path d="M71.3 861.9 C71.8 863.1 73.4 866 74.3 868.9 C75.3 871.7 76.3 878.1 77.1 879.3 C78 880.4 78.7 879.1 79.4 875.8 C80.2 872.5 81 865.4 81.7 859.6 C82.5 853.8 83.3 847.6 84.1 841.1 C84.8 834.5 85.6 826.8 86.4 820.3 C87.1 813.7 87.9 805.7 88.7 801.7 C89.5 797.8 90.3 796.7 91 796.7 C91.7 796.7 92.3 798.6 92.9 801.7 C93.4 804.9 93.8 811 94.2 815.6 C94.7 820.3 94.9 825.3 95.6 829.5 C96.4 833.8 97.7 837.6 98.6 841.1 C99.6 844.6 100.4 846.1 101.4 850.3 C102.5 854.6 103.8 862.1 104.9 866.5 C105.9 871 106.8 873.8 107.7 877 C108.5 880.1 109.1 886.1 110 885.5 C110.9 884.9 112.1 879 113 873.5 C113.9 868 114.5 860 115.3 852.7 C116.1 845.3 116.6 837.6 117.6 829.5 C118.6 821.4 120.1 809.1 121.1 804.1 C122 799 122.6 799 123.4 799 C124.2 799 124.9 799.7 125.7 804.1 C126.5 808.4 127.1 819.1 128 824.9 C129 830.7 130.3 834.5 131.5 838.8 C132.7 843 133.7 846.7 135 850.3 C136.2 854 137.7 857.5 138.9 860.8 C140.1 864 141.3 870.2 142.4 870 C143.5 869.8 144.3 865.2 145.4 859.6 C146.5 854 147.9 843.2 148.9 836.5 C149.8 829.7 150.4 824.9 151.2 819.1 C151.9 813.3 152.5 807 153.5 801.7 C154.4 796.5 156 789.3 157 787.4 C157.9 785.5 158.5 785.5 159.3 790.2 C160 794.9 160.7 808.7 161.6 815.6 C162.5 822.6 163.6 826.8 164.6 831.8 C165.6 836.8 166.2 840.7 167.4 845.7 C168.5 850.7 170.2 857 171.5 861.9 C172.9 866.9 174.4 873.8 175.5 875.3 C176.5 876.9 177 875.3 177.8 871.2 C178.6 867 179.3 857.7 180.1 850.3 C180.9 843 181.6 834.1 182.4 827.2 C183.2 820.3 184 814.1 184.7 808.7 C185.5 803.3 186.2 798.5 187 794.8 C187.9 791.1 189.3 787.5 190.1 786.7 C190.8 785.9 191 787.3 191.7 790.2 C192.3 793.1 193 799.8 194 804.1 C194.9 808.3 196.3 810.8 197.5 815.6 C198.6 820.4 199.6 828.7 200.9 833 C202.3 837.2 204.4 837.8 205.6 841.1 C206.7 844.4 207 849.3 207.9 852.7 C208.8 856.1 209.9 861.1 210.9 861.5 C211.8 861.8 212.8 858.4 213.7 855 C214.5 851.6 215.2 845.3 216 841.1 C216.7 836.8 217.3 833.4 218.3 829.5 C219.2 825.7 220.8 820.6 221.8 817.9 C222.7 815.3 223.5 813 224.1 813.8 C224.6 814.5 224.7 817.6 225.2 822.6 C225.7 827.5 226.5 836.8 227.1 843.4 C227.7 850 228 857.3 228.7 861.9 C229.4 866.5 230.2 868.7 231 871.2 C231.8 873.7 232 876.3 233.3 877 C234.7 877.7 237.6 876.5 239.1 875.3 C240.7 874.2 241.4 874.2 242.6 870 C243.7 865.8 245 856.7 246.1 850.3 C247.1 844 247.9 837.6 248.8 831.8 C249.8 826 250.8 819.7 251.8 815.6 C252.9 811.6 254.5 809.3 255.3 807.5 C256.2 805.8 256.4 802.7 256.9 805.2 C257.5 807.7 258.1 817.2 258.8 822.6 C259.5 828 260.3 833 261.1 837.6 C261.9 842.2 262.5 846.7 263.4 850.3 C264.3 854 265.5 856.9 266.4 859.6 C267.4 862.3 268.2 863.5 269.2 866.5 C270.2 869.6 271.2 874.6 272.2 878.1 C273.2 881.6 274.1 886.6 275 887.4 C275.8 888.1 276.5 886.6 277.3 882.7 C278.1 878.9 278.8 870.4 279.6 864.2 C280.4 858.1 281.2 851.9 281.9 845.7 C282.7 839.5 283.5 833 284.2 827.2 C285 821.4 285.7 815.2 286.6 811 C287.4 806.8 288.8 802.6 289.6 802.2 C290.3 801.8 290.5 803.7 291.2 808.7 C291.8 813.6 292.5 825.8 293.5 831.8 C294.5 837.8 295.9 842 297 844.6 C298.1 847.1 299.5 846.9 300 847.3 L300 915.7 L71.3 915.7 Z" fill="rgba(126,178,109,0.8)" stroke="none"/>
<path d="M71.3 861.9 C71.8 863.1 73.4 866 74.3 868.9 C75.3 871.7 76.3 878.1 77.1 879.3 C78 880.4 78.7 879.1 79.4 875.8 C80.2 872.5 81 865.4 81.7 859.6 C82.5 853.8 83.3 847.6 84.1 841.1 C84.8 834.5 85.6 826.8 86.4 820.3 C87.1 813.7 87.9 805.7 88.7 801.7 C89.5 797.8 90.3 796.7 91 796.7 C91.7 796.7 92.3 798.6 92.9 801.7 C93.4 804.9 93.8 811 94.2 815.6 C94.7 820.3 94.9 825.3 95.6 829.5 C96.4 833.8 97.7 837.6 98.6 841.1 C99.6 844.6 100.4 846.1 101.4 850.3 C102.5 854.6 103.8 862.1 104.9 866.5 C105.9 871 106.8 873.8 107.7 877 C108.5 880.1 109.1 886.1 110 885.5 C110.9 884.9 112.1 879 113 873.5 C113.9 868 114.5 860 115.3 852.7 C116.1 845.3 116.6 837.6 117.6 829.5 C118.6 821.4 120.1 809.1 121.1 804.1 C122 799 122.6 799 123.4 799 C124.2 799 124.9 799.7 125.7 804.1 C126.5 808.4 127.1 819.1 128 824.9 C129 830.7 130.3 834.5 131.5 838.8 C132.7 843 133.7 846.7 135 850.3 C136.2 854 137.7 857.5 138.9 860.8 C140.1 864 141.3 870.2 142.4 870 C143.5 869.8 144.3 865.2 145.4 859.6 C146.5 854 147.9 843.2 148.9 836.5 C149.8 829.7 150.4 824.9 151.2 819.1 C151.9 813.3 152.5 807 153.5 801.7 C154.4 796.5 156 789.3 157 787.4 C157.9 785.5 158.5 785.5 159.3 790.2 C160 794.9 160.7 808.7 161.6 815.6 C162.5 822.6 163.6 826.8 164.6 831.8 C165.6 836.8 166.2 840.7 167.4 845.7 C168.5 850.7 170.2 857 171.5 861.9 C172.9 866.9 174.4 873.8 175.5 875.3 C176.5 876.9 177 875.3 177.8 871.2 C178.6 867 179.3 857.7 180.1 850.3 C180.9 843 181.6 834.1 182.4 827.2 C183.2 820.3 184 814.1 184.7 808.7 C185.5 803.3 186.2 798.5 187 794.8 C187.9 791.1 189.3 787.5 190.1 786.7 C190.8 785.9 191 787.3 191.7 790.2 C192.3 793.1 193 799.8 194 804.1 C194.9 808.3 196.3 810.8 197.5 815.6 C198.6 820.4 199.6 828.7 200.9 833 C202.3 837.2 204.4 837.8 205.6 841.1 C206.7 844.4 207 849.3 207.9 852.7 C208.8 856.1 209.9 861.1 210.9 861.5 C211.8 861.8 212.8 858.4 213.7 855 C214.5 851.6 215.2 845.3 216 841.1 C216.7 836.8 217.3 833.4 218.3 829.5 C219.2 825.7 220.8 820.6 221.8 817.9 C222.7 815.3 223.5 813 224.1 813.8 C224.6 814.5 224.7 817.6 225.2 822.6 C225.7 827.5 226.5 836.8 227.1 843.4 C227.7 850 228 857.3 228.7 861.9 C229.4 866.5 230.2 868.7 231 871.2 C231.8 873.7 232 876.3 233.3 877 C234.7 877.7 237.6 876.5 239.1 875.3 C240.7 874.2 241.4 874.2 242.6 870 C243.7 865.8 245 856.7 246.1 850.3 C247.1 844 247.9 837.6 248.8 831.8 C249.8 826 250.8 819.7 251.8 815.6 C252.9 811.6 254.5 809.3 255.3 807.5 C256.2 805.8 256.4 802.7 256.9 805.2 C257.5 807.7 258.1 817.2 258.8 822.6 C259.5 828 260.3 833 261.1 837.6 C261.9 842.2 262.5 846.7 263.4 850.3 C264.3 854 265.5 856.9 266.4 859.6 C267.4 862.3 268.2 863.5 269.2 866.5 C270.2 869.6 271.2 874.6 272.2 878.1 C273.2 881.6 274.1 886.6 275 887.4 C275.8 888.1 276.5 886.6 277.3 882.7 C278.1 878.9 278.8 870.4 279.6 864.2 C280.4 858.1 281.2 851.9 281.9 845.7 C282.7 839.5 283.5 833 284.2 827.2 C285 821.4 285.7 815.2 286.6 811 C287.4 806.8 288.8 802.6 289.6 802.2 C290.3 801.8 290.5 803.7 291.2 808.7 C291.8 813.6 292.5 825.8 293.5 831.8 C294.5 837.8 295.9 842 297 844.6 C298.1 847.1 299.5 846.9 300 847.3" fill="none" stroke="#7eb26d" stroke-width="2.8" stroke-linejoin="round" stroke-linecap="butt"/>
<rect x="41.8" y="950.1" width="12" height="3.6" fill="#7eb26d"/>
<path d="M1632 773.5H1861M1632 808.5H1861M1632 844.5H1861M1632 879.5H1861M1632 915.5H1861M1694.5 773.3V915.2M1760.5 773.3V915.2M1826.5 773.3V915.2" stroke="#454548" stroke-width="1" fill="none" shape-rendering="crispEdges"/>
<path d="M1632 876.3 C1632.5 877.3 1634 880.9 1634.8 882.7 C1635.6 884.6 1636.1 887.6 1637.1 887.4 C1638.1 887.2 1639.7 885.8 1640.6 881.6 C1641.4 877.3 1641.6 868.7 1642.2 861.9 C1642.8 855.2 1643.4 848 1644.1 841.1 C1644.8 834.1 1645.6 826.4 1646.4 820.3 C1647.1 814.1 1647.7 808.3 1648.7 804.1 C1649.6 799.8 1651.3 796.1 1652.2 794.8 C1653 793.4 1653.4 793.6 1653.8 796 C1654.2 798.3 1654.4 804.2 1654.7 808.7 C1655 813.1 1655.3 817.6 1655.6 822.6 C1656 827.6 1656.4 834.1 1656.8 838.8 C1657.2 843.4 1657.4 846.9 1657.9 850.3 C1658.5 853.8 1659.5 856.9 1660.3 859.6 C1661 862.3 1661.6 863.1 1662.6 866.5 C1663.5 870 1664.9 876 1666 880.4 C1667.2 884.9 1668.4 892 1669.5 893.2 C1670.7 894.3 1672.1 891.4 1673 887.4 C1673.8 883.3 1674 875 1674.6 868.9 C1675.2 862.7 1675.8 857.3 1676.5 850.3 C1677.2 843.4 1678 834.1 1678.8 827.2 C1679.5 820.3 1680.2 813.6 1681.1 808.7 C1682 803.7 1683.2 799.4 1684.1 797.6 C1685 795.7 1685.9 795.5 1686.4 797.6 C1686.9 799.6 1687.1 805.7 1687.3 809.8 C1687.6 814 1687.6 818.1 1688 822.6 C1688.4 827 1689.1 832.2 1689.6 836.5 C1690.2 840.7 1690.7 844.2 1691.5 848 C1692.3 851.9 1693.3 856.1 1694.3 859.6 C1695.2 863.1 1695.9 865.4 1697.3 868.9 C1698.6 872.3 1701 879.7 1702.4 880.4 C1703.7 881.2 1704.6 877.3 1705.4 873.5 C1706.2 869.6 1706.4 862.7 1707 857.3 C1707.6 851.9 1708.2 847.3 1708.9 841.1 C1709.6 834.9 1710.4 826.8 1711.2 820.3 C1711.9 813.7 1712.4 807.1 1713.5 801.7 C1714.6 796.4 1716.6 790.4 1717.7 788.3 C1718.7 786.2 1719.2 786 1719.7 789 C1720.2 792 1720.4 800.8 1720.7 806.4 C1721 812 1721 816.4 1721.6 822.6 C1722.2 828.7 1723.4 836.8 1724.4 843.4 C1725.3 850 1726.2 856.5 1727.4 861.9 C1728.5 867.3 1730 871.7 1731.3 875.8 C1732.6 879.8 1733.8 885.6 1735 886.2 C1736.2 886.8 1737.6 883.7 1738.5 879.3 C1739.4 874.8 1739.7 866.3 1740.3 859.6 C1741 852.8 1741.7 845.9 1742.4 838.8 C1743.1 831.6 1744 823.7 1744.7 816.8 C1745.5 809.8 1746.1 802.2 1747 797.1 C1748 792 1749.6 787.6 1750.5 786.2 C1751.4 784.9 1751.8 785.7 1752.4 789 C1752.9 792.4 1753.3 800.8 1753.8 806.4 C1754.2 812 1754.3 817.6 1755.1 822.6 C1756 827.6 1757.6 832.4 1758.6 836.5 C1759.6 840.5 1760.2 843.6 1760.9 846.9 C1761.7 850.1 1762.3 853.6 1763.2 856.1 C1764.2 858.6 1765.7 859 1766.7 861.9 C1767.7 864.8 1767.9 872.3 1769 873.5 C1770.1 874.6 1772 872.7 1773.2 868.9 C1774.4 865 1775.1 855.7 1776 850.3 C1776.8 844.9 1777.5 840.7 1778.3 836.5 C1779.1 832.2 1779.6 827.7 1780.6 824.9 C1781.6 822.1 1783.2 820.8 1784.1 819.8 C1784.9 818.8 1785.3 817.1 1785.7 819.1 C1786.1 821.1 1786.3 827.4 1786.6 831.8 C1786.9 836.3 1787.1 840.3 1787.5 845.7 C1788 851.1 1788.6 858.4 1789.2 864.2 C1789.7 870 1790.3 876.4 1791 880.4 C1791.7 884.5 1792.6 886.4 1793.3 888.5 C1794.1 890.6 1794.5 893.2 1795.6 893.2 C1796.8 893.2 1798.9 891 1800.3 888.5 C1801.6 886 1802.8 882 1803.7 878.1 C1804.7 874.3 1805.3 870 1806.1 865.4 C1806.8 860.8 1807.6 856.3 1808.4 850.3 C1809.1 844.4 1809.9 835.9 1810.7 829.5 C1811.5 823.1 1811.9 815.4 1813 812.2 C1814.1 808.9 1816.2 810 1817.2 809.8 C1818.1 809.6 1818.3 807.9 1818.8 811 C1819.2 814.1 1819.6 822.6 1819.9 828.4 C1820.3 834.1 1820.6 840.7 1821.1 845.7 C1821.6 850.7 1822.1 854.6 1822.7 858.4 C1823.3 862.3 1823.7 865.2 1824.6 868.9 C1825.5 872.5 1827.1 878.3 1828 880.4 C1829 882.5 1829.4 879.7 1830.4 881.6 C1831.3 883.5 1832.9 890.3 1833.8 892 C1834.8 893.7 1835.4 893.2 1836.1 892 C1836.8 890.8 1837.4 887.8 1838 885.1 C1838.6 882.4 1839.1 880.4 1839.6 875.8 C1840.2 871.2 1840.7 863.5 1841.2 857.3 C1841.8 851.1 1842.5 844.6 1843.1 838.8 C1843.7 833 1844.4 827.2 1844.9 822.6 C1845.5 817.9 1845.7 814.5 1846.6 811 C1847.4 807.5 1849.1 802.9 1850 801.7 C1850.9 800.6 1851.3 800.6 1851.9 804.1 C1852.4 807.5 1852.8 816.4 1853.3 822.6 C1853.7 828.7 1854.1 835.7 1854.7 841.1 C1855.2 846.5 1855.9 851.1 1856.5 855 C1857.1 858.8 1857.4 862 1858.1 864.2 C1858.9 866.4 1860.4 867.5 1860.9 868.2 L1860.9 915.7 L1632 915.7 Z" fill="rgba(126,178,109,0.8)" stroke="none"/>
<path d="M1632 876.3 C1632.5 877.3 1634 880.9 1634.8 882.7 C1635.6 884.6 1636.1 887.6 1637.1 887.4 C1638.1 887.2 1639.7 885.8 1640.6 881.6 C1641.4 877.3 1641.6 868.7 1642.2 861.9 C1642.8 855.2 1643.4 848 1644.1 841.1 C1644.8 834.1 1645.6 826.4 1646.4 820.3 C1647.1 814.1 1647.7 808.3 1648.7 804.1 C1649.6 799.8 1651.3 796.1 1652.2 794.8 C1653 793.4 1653.4 793.6 1653.8 796 C1654.2 798.3 1654.4 804.2 1654.7 808.7 C1655 813.1 1655.3 817.6 1655.6 822.6 C1656 827.6 1656.4 834.1 1656.8 838.8 C1657.2 843.4 1657.4 846.9 1657.9 850.3 C1658.5 853.8 1659.5 856.9 1660.3 859.6 C1661 862.3 1661.6 863.1 1662.6 866.5 C1663.5 870 1664.9 876 1666 880.4 C1667.2 884.9 1668.4 892 1669.5 893.2 C1670.7 894.3 1672.1 891.4 1673 887.4 C1673.8 883.3 1674 875 1674.6 868.9 C1675.2 862.7 1675.8 857.3 1676.5 850.3 C1677.2 843.4 1678 834.1 1678.8 827.2 C1679.5 820.3 1680.2 813.6 1681.1 808.7 C1682 803.7 1683.2 799.4 1684.1 797.6 C1685 795.7 1685.9 795.5 1686.4 797.6 C1686.9 799.6 1687.1 805.7 1687.3 809.8 C1687.6 814 1687.6 818.1 1688 822.6 C1688.4 827 1689.1 832.2 1689.6 836.5 C1690.2 840.7 1690.7 844.2 1691.5 848 C1692.3 851.9 1693.3 856.1 1694.3 859.6 C1695.2 863.1 1695.9 865.4 1697.3 868.9 C1698.6 872.3 1701 879.7 1702.4 880.4 C1703.7 881.2 1704.6 877.3 1705.4 873.5 C1706.2 869.6 1706.4 862.7 1707 857.3 C1707.6 851.9 1708.2 847.3 1708.9 841.1 C1709.6 834.9 1710.4 826.8 1711.2 820.3 C1711.9 813.7 1712.4 807.1 1713.5 801.7 C1714.6 796.4 1716.6 790.4 1717.7 788.3 C1718.7 786.2 1719.2 786 1719.7 789 C1720.2 792 1720.4 800.8 1720.7 806.4 C1721 812 1721 816.4 1721.6 822.6 C1722.2 828.7 1723.4 836.8 1724.4 843.4 C1725.3 850 1726.2 856.5 1727.4 861.9 C1728.5 867.3 1730 871.7 1731.3 875.8 C1732.6 879.8 1733.8 885.6 1735 886.2 C1736.2 886.8 1737.6 883.7 1738.5 879.3 C1739.4 874.8 1739.7 866.3 1740.3 859.6 C1741 852.8 1741.7 845.9 1742.4 838.8 C1743.1 831.6 1744 823.7 1744.7 816.8 C1745.5 809.8 1746.1 802.2 1747 797.1 C1748 792 1749.6 787.6 1750.5 786.2 C1751.4 784.9 1751.8 785.7 1752.4 789 C1752.9 792.4 1753.3 800.8 1753.8 806.4 C1754.2 812 1754.3 817.6 1755.1 822.6 C1756 827.6 1757.6 832.4 1758.6 836.5 C1759.6 840.5 1760.2 843.6 1760.9 846.9 C1761.7 850.1 1762.3 853.6 1763.2 856.1 C1764.2 858.6 1765.7 859 1766.7 861.9 C1767.7 864.8 1767.9 872.3 1769 873.5 C1770.1 874.6 1772 872.7 1773.2 868.9 C1774.4 865 1775.1 855.7 1776 850.3 C1776.8 844.9 1777.5 840.7 1778.3 836.5 C1779.1 832.2 1779.6 827.7 1780.6 824.9 C1781.6 822.1 1783.2 820.8 1784.1 819.8 C1784.9 818.8 1785.3 817.1 1785.7 819.1 C1786.1 821.1 1786.3 827.4 1786.6 831.8 C1786.9 836.3 1787.1 840.3 1787.5 845.7 C1788 851.1 1788.6 858.4 1789.2 864.2 C1789.7 870 1790.3 876.4 1791 880.4 C1791.7 884.5 1792.6 886.4 1793.3 888.5 C1794.1 890.6 1794.5 893.2 1795.6 893.2 C1796.8 893.2 1798.9 891 1800.3 888.5 C1801.6 886 1802.8 882 1803.7 878.1 C1804.7 874.3 1805.3 870 1806.1 865.4 C1806.8 860.8 1807.6 856.3 1808.4 850.3 C1809.1 844.4 1809.9 835.9 1810.7 829.5 C1811.5 823.1 1811.9 815.4 1813 812.2 C1814.1 808.9 1816.2 810 1817.2 809.8 C1818.1 809.6 1818.3 807.9 1818.8 811 C1819.2 814.1 1819.6 822.6 1819.9 828.4 C1820.3 834.1 1820.6 840.7 1821.1 845.7 C1821.6 850.7 1822.1 854.6 1822.7 858.4 C1823.3 862.3 1823.7 865.2 1824.6 868.9 C1825.5 872.5 1827.1 878.3 1828 880.4 C1829 882.5 1829.4 879.7 1830.4 881.6 C1831.3 883.5 1832.9 890.3 1833.8 892 C1834.8 893.7 1835.4 893.2 1836.1 892 C1836.8 890.8 1837.4 887.8 1838 885.1 C1838.6 882.4 1839.1 880.4 1839.6 875.8 C1840.2 871.2 1840.7 863.5 1841.2 857.3 C1841.8 851.1 1842.5 844.6 1843.1 838.8 C1843.7 833 1844.4 827.2 1844.9 822.6 C1845.5 817.9 1845.7 814.5 1846.6 811 C1847.4 807.5 1849.1 802.9 1850 801.7 C1850.9 800.6 1851.3 800.6 1851.9 804.1 C1852.4 807.5 1852.8 816.4 1853.3 822.6 C1853.7 828.7 1854.1 835.7 1854.7 841.1 C1855.2 846.5 1855.9 851.1 1856.5 855 C1857.1 858.8 1857.4 862 1858.1 864.2 C1858.9 866.4 1860.4 867.5 1860.9 868.2" fill="none" stroke="#7eb26d" stroke-width="2.8" stroke-linejoin="round" stroke-linecap="butt"/>
<rect x="1602.8" y="950.1" width="12" height="3.6" fill="#7eb26d"/>
<path d="M26.3 715.3 L26.3 715.3 L34.1 699.2 L35 673.2 L36.1 623.6 L37.1 581.5 L37.8 565 L38.6 590.6 L40 640.1 L41.6 666.5 L44.6 685.2 L48 686.7 L49.6 698.3 L51.6 715.3 L67.9 715.3 L75.7 699.1 L76.6 672.9 L77.7 622.9 L78.7 580.5 L79.4 563.8 L80.2 589.6 L81.6 639.5 L83.2 666.1 L86.2 685 L89.6 686.5 L91.2 698.2 L93.2 715.3 L109.5 715.3 L117.3 697.9 L118.2 669.9 L119.3 616.3 L120.3 570.9 L121 553 L121.8 580.6 L123.2 634.1 L124.8 662.6 L127.8 682.8 L131.2 684.5 L132.8 697 L134.8 715.3 L151.3 715.3 L159.1 699.2 L160 673.2 L161.1 623.6 L162.1 581.5 L162.8 565 L163.6 590.6 L165 640.1 L166.6 666.5 L169.6 685.2 L173 686.7 L174.6 698.3 L176.6 715.3 L192.9 715.3 L200.7 699.6 L201.6 674.3 L202.7 626.1 L203.7 585.1 L204.4 569 L205.2 593.9 L206.6 642.1 L208.2 667.8 L211.2 686 L214.6 687.5 L216.2 698.8 L218.2 715.3 L234.5 715.3 L242.3 698.1 L243.2 670.2 L244.3 617.1 L245.3 572 L246 554.3 L246.8 581.7 L248.2 634.8 L249.8 663 L252.8 683.1 L256.2 684.7 L257.8 697.1 L259.8 715.3 L276.2 715.3 L284 701.6 L284.9 679.4 L286 637 L287 601.1 L287.7 587 L288.5 608.8 L289.9 651.1 L291.5 673.6 L294.5 689.6 L297.9 690.9 L299.5 700.8 L301.5 715.3 L315 715.3 L315 715.3 L26.3 715.3 Z" fill="rgba(31,118,189,0.18)" stroke="none"/>
<path d="M26.3 715.3 L26.3 715.3 L34.1 699.2 L35 673.2 L36.1 623.6 L37.1 581.5 L37.8 565 L38.6 590.6 L40 640.1 L41.6 666.5 L44.6 685.2 L48 686.7 L49.6 698.3 L51.6 715.3 L67.9 715.3 L75.7 699.1 L76.6 672.9 L77.7 622.9 L78.7 580.5 L79.4 563.8 L80.2 589.6 L81.6 639.5 L83.2 666.1 L86.2 685 L89.6 686.5 L91.2 698.2 L93.2 715.3 L109.5 715.3 L117.3 697.9 L118.2 669.9 L119.3 616.3 L120.3 570.9 L121 553 L121.8 580.6 L123.2 634.1 L124.8 662.6 L127.8 682.8 L131.2 684.5 L132.8 697 L134.8 715.3 L151.3 715.3 L159.1 699.2 L160 673.2 L161.1 623.6 L162.1 581.5 L162.8 565 L163.6 590.6 L165 640.1 L166.6 666.5 L169.6 685.2 L173 686.7 L174.6 698.3 L176.6 715.3 L192.9 715.3 L200.7 699.6 L201.6 674.3 L202.7 626.1 L203.7 585.1 L204.4 569 L205.2 593.9 L206.6 642.1 L208.2 667.8 L211.2 686 L214.6 687.5 L216.2 698.8 L218.2 715.3 L234.5 715.3 L242.3 698.1 L243.2 670.2 L244.3 617.1 L245.3 572 L246 554.3 L246.8 581.7 L248.2 634.8 L249.8 663 L252.8 683.1 L256.2 684.7 L257.8 697.1 L259.8 715.3 L276.2 715.3 L284 701.6 L284.9 679.4 L286 637 L287 601.1 L287.7 587 L288.5 608.8 L289.9 651.1 L291.5 673.6 L294.5 689.6 L297.9 690.9 L299.5 700.8 L301.5 715.3 L315 715.3" fill="none" stroke="#1f78c1" stroke-width="1" stroke-linejoin="round"/>
<path d="M1587.8 552.9 L1591.3 596.5 L1595.5 595.3 L1598.9 601.1 L1602.4 606.2 L1612.8 605 L1616.3 565.2 L1619.8 560.6 L1624.4 559.4 L1630.2 557.1 L1633.6 577.9 L1637.1 596.5 L1639.4 598.8 L1644.1 606.9 L1653.8 605 L1657.9 562.9 L1662.6 560.6 L1671.8 557.8 L1675.3 577.9 L1677.6 589.5 L1681.1 601.1 L1685.7 606.9 L1695 605.7 L1698 582.6 L1699.6 566.4 L1703.1 561.7 L1713.5 556.7 L1717 577.9 L1720.4 596.5 L1727.4 605 L1732 606.4 L1737.8 605.3 L1740.1 576.8 L1740.8 558.7 L1747 561.3 L1755.1 558.3 L1758.6 575.6 L1762.1 594.1 L1769 605.7 L1778.3 606.4 L1780.6 590.7 L1782.9 565.2 L1786.4 559.4 L1796.8 558.3 L1799.6 577.9 L1802.6 595.3 L1810.7 605.7 L1821.1 606.4 L1824.6 568.7 L1828 561.7 L1838.5 557.6 L1841.2 577.9 L1844.2 595.3 L1848.9 603.4 L1852.3 608.7 L1855.8 604.6 L1862.8 605 L1866.2 568.7 L1869.7 561.3 L1873.2 559.4 L1876.6 561.7 L1876.6 715.6 L1587.8 715.6 Z" fill="rgba(31,118,189,0.18)" stroke="none"/>
<path d="M1587.8 552.9 L1591.3 596.5 L1595.5 595.3 L1598.9 601.1 L1602.4 606.2 L1612.8 605 L1616.3 565.2 L1619.8 560.6 L1624.4 559.4 L1630.2 557.1 L1633.6 577.9 L1637.1 596.5 L1639.4 598.8 L1644.1 606.9 L1653.8 605 L1657.9 562.9 L1662.6 560.6 L1671.8 557.8 L1675.3 577.9 L1677.6 589.5 L1681.1 601.1 L1685.7 606.9 L1695 605.7 L1698 582.6 L1699.6 566.4 L1703.1 561.7 L1713.5 556.7 L1717 577.9 L1720.4 596.5 L1727.4 605 L1732 606.4 L1737.8 605.3 L1740.1 576.8 L1740.8 558.7 L1747 561.3 L1755.1 558.3 L1758.6 575.6 L1762.1 594.1 L1769 605.7 L1778.3 606.4 L1780.6 590.7 L1782.9 565.2 L1786.4 559.4 L1796.8 558.3 L1799.6 577.9 L1802.6 595.3 L1810.7 605.7 L1821.1 606.4 L1824.6 568.7 L1828 561.7 L1838.5 557.6 L1841.2 577.9 L1844.2 595.3 L1848.9 603.4 L1852.3 608.7 L1855.8 604.6 L1862.8 605 L1866.2 568.7 L1869.7 561.3 L1873.2 559.4 L1876.6 561.7" fill="none" stroke="#1f78c1" stroke-width="1" stroke-linejoin="round"/>
<path d="M650.2 955.2 L672.2 955.2 L675.6 792.9 L679.4 955.2 L939 955.2 L939 955.2 L650.2 955.2 Z" fill="rgba(31,118,189,0.18)" stroke="none"/>
<path d="M650.2 955.2 L672.2 955.2 L675.6 792.9 L679.4 955.2 L939 955.2" fill="none" stroke="#1f78c1" stroke-width="1" stroke-linejoin="round"/>
<path d="M963.2 955.2 L985.2 954 L988.6 792.9 L992.4 954 L998.6 953.3 L1002.1 955.2 L1040.3 953.3 L1043.7 955.2 L1081.9 953.3 L1085.4 955.2 L1123.6 953.3 L1127 955.2 L1165.2 953.3 L1168.7 955.2 L1206.9 953.3 L1210.4 955.2 L1252 953.6 L1252 955.2 L963.2 955.2 Z" fill="rgba(31,118,189,0.18)" stroke="none"/>
<path d="M963.2 955.2 L985.2 954 L988.6 792.9 L992.4 954 L998.6 953.3 L1002.1 955.2 L1040.3 953.3 L1043.7 955.2 L1081.9 953.3 L1085.4 955.2 L1123.6 953.3 L1127 955.2 L1165.2 953.3 L1168.7 955.2 L1206.9 953.3 L1210.4 955.2 L1252 953.6" fill="none" stroke="#1f78c1" stroke-width="1" stroke-linejoin="round"/>
<path d="M86.75 693.57 A88.9 88.9 0 1 1 255.85 693.57 L229.12 684.89 A60.8 60.8 0 1 0 113.48 684.89 Z" fill="#272727"/>
<path d="M80.47 695.61 A95.5 95.5 0 1 1 262.13 695.61 L257.37 694.07 A90.5 90.5 0 1 0 85.23 694.07 Z" fill="#508642"/>
<text x="0" y="0" transform="translate(71.91 698.39) rotate(252.00)" text-anchor="middle" dominant-baseline="central" style="font-family:'Liberation Sans',sans-serif;font-size:14px" fill="#d8d9da">0</text>
<text x="0" y="0" transform="translate(269.35 697.96) rotate(468.00)" text-anchor="middle" dominant-baseline="central" style="font-family:'Liberation Sans',sans-serif;font-size:14px" fill="#d8d9da">200</text>
<path d="M1647.95 693.57 A88.9 88.9 0 1 1 1817.05 693.57 L1790.32 684.89 A60.8 60.8 0 1 0 1674.68 684.89 Z" fill="#272727"/>
<path d="M1647.95 693.57 A88.9 88.9 0 0 1 1644.36 654.51 L1672.22 658.18 A60.8 60.8 0 0 0 1674.68 684.89 Z" fill="#508642"/>
<path d="M1641.67 695.61 A95.5 95.5 0 1 1 1823.33 695.61 L1818.57 694.07 A90.5 90.5 0 1 0 1646.43 694.07 Z" fill="#508642"/>
<text x="0" y="0" transform="translate(1633.11 698.39) rotate(252.00)" text-anchor="middle" dominant-baseline="central" style="font-family:'Liberation Sans',sans-serif;font-size:14px" fill="#d8d9da">0</text>
<text x="0" y="0" transform="translate(1830.55 697.96) rotate(468.00)" text-anchor="middle" dominant-baseline="central" style="font-family:'Liberation Sans',sans-serif;font-size:14px" fill="#d8d9da">5</text>
<path d="M398.95 933.57 A88.9 88.9 0 1 1 568.05 933.57 L541.32 924.89 A60.8 60.8 0 1 0 425.68 924.89 Z" fill="#272727"/>
<path d="M392.67 935.61 A95.5 95.5 0 1 1 574.33 935.61 L569.57 934.07 A90.5 90.5 0 1 0 397.43 934.07 Z" fill="#508642"/>
<text x="0" y="0" transform="translate(384.11 938.39) rotate(252.00)" text-anchor="middle" dominant-baseline="central" style="font-family:'Liberation Sans',sans-serif;font-size:14px" fill="#d8d9da">0</text>
<text x="0" y="0" transform="translate(581.55 937.96) rotate(468.00)" text-anchor="middle" dominant-baseline="central" style="font-family:'Liberation Sans',sans-serif;font-size:14px" fill="#d8d9da">10</text>
<path d="M1335.95 933.57 A88.9 88.9 0 1 1 1505.05 933.57 L1478.32 924.89 A60.8 60.8 0 1 0 1362.68 924.89 Z" fill="#272727"/>
<path d="M1335.95 933.57 A88.9 88.9 0 0 1 1367.89 834.44 L1384.52 857.09 A60.8 60.8 0 0 0 1362.68 924.89 Z" fill="#508642"/>
<path d="M1329.67 935.61 A95.5 95.5 0 0 1 1328.96 878.88 L1333.75 880.31 A90.5 90.5 0 0 0 1334.43 934.07 Z" fill="#bf1b00"/>
<path d="M1328.96 878.88 A95.5 95.5 0 0 1 1515.81 900.10 L1510.82 900.42 A90.5 90.5 0 0 0 1333.75 880.31 Z" fill="#508642"/>
<path d="M1515.81 900.10 A95.5 95.5 0 0 1 1511.33 935.61 L1506.57 934.07 A90.5 90.5 0 0 0 1510.82 900.42 Z" fill="#bf1b00"/>
<text x="0" y="0" transform="translate(1321.11 938.39) rotate(252.00)" text-anchor="middle" dominant-baseline="central" style="font-family:'Liberation Sans',sans-serif;font-size:14px" fill="#d8d9da">11</text>
<text x="0" y="0" transform="translate(1320.33 876.32) rotate(286.56)" text-anchor="middle" dominant-baseline="central" style="font-family:'Liberation Sans',sans-serif;font-size:14px" fill="#d8d9da">11.8</text>
<text x="0" y="0" transform="translate(1523.40 899.63) rotate(446.40)" text-anchor="middle" dominant-baseline="central" style="font-family:'Liberation Sans',sans-serif;font-size:14px" fill="#d8d9da">15.5</text>
<text x="0" y="0" transform="translate(1518.55 937.96) rotate(468.00)" text-anchor="middle" dominant-baseline="central" style="font-family:'Liberation Sans',sans-serif;font-size:14px" fill="#d8d9da">16</text>
</svg>
<div id="tx">
<div class="t" style="left:283.50px;width:400px;text-align:center;top:145.75px;font-size:13.14px;line-height:16px;color:#d8d9da;font-weight:normal;-webkit-text-stroke:0.25px;">Solar-Panel Produktion (Watt)</div>
<div class="t" style="left:1220.50px;width:400px;text-align:center;top:145.75px;font-size:13.14px;line-height:16px;color:#d8d9da;font-weight:normal;-webkit-text-stroke:0.25px;">Solar Panel Spannung (Volt)</div>
<div class="t" style="left:-29.00px;width:400px;text-align:center;top:505.75px;font-size:13.14px;line-height:16px;color:#d8d9da;font-weight:normal;-webkit-text-stroke:0.25px;">Solar-Panel Produktion (Watt)</div>
<div class="t" style="left:439.00px;width:400px;text-align:center;top:505.75px;font-size:13.14px;line-height:16px;color:#d8d9da;font-weight:normal;-webkit-text-stroke:0.25px;">Batterie Spannung (Volt)</div>
<div class="t" style="left:1064.00px;width:400px;text-align:center;top:505.75px;font-size:13.14px;line-height:16px;color:#d8d9da;font-weight:normal;-webkit-text-stroke:0.25px;">Aktueller Verbrauch (IP-CAMs &amp; Licht in Watt)</div>
<div class="t" style="left:1532.00px;width:400px;text-align:center;top:505.75px;font-size:13.14px;line-height:16px;color:#d8d9da;font-weight:normal;-webkit-text-stroke:0.25px;">Aktueller Verbrauch (Ampere)</div>
<div class="t" style="left:-29.00px;width:400px;text-align:center;top:745.75px;font-size:13.14px;line-height:16px;color:#d8d9da;font-weight:normal;-webkit-text-stroke:0.25px;">Batterie-Temperatur (Celsius)</div>
<div class="t" style="left:283.00px;width:400px;text-align:center;top:745.75px;font-size:13.14px;line-height:16px;color:#d8d9da;font-weight:normal;-webkit-text-stroke:0.25px;">Batterie-Ladung (Ampere)</div>
<div class="t" style="left:595.00px;width:400px;text-align:center;top:745.75px;font-size:13.14px;line-height:16px;color:#d8d9da;font-weight:normal;-webkit-text-stroke:0.25px;">Solar Produktion gesamt (Tag)</div>
<div class="t" style="left:908.00px;width:400px;text-align:center;top:745.75px;font-size:13.14px;line-height:16px;color:#d8d9da;font-weight:normal;-webkit-text-stroke:0.25px;">Verbrauch gesamt (Tag)</div>
<div class="t" style="left:1220.00px;width:400px;text-align:center;top:745.75px;font-size:13.14px;line-height:16px;color:#d8d9da;font-weight:normal;-webkit-text-stroke:0.25px;">Batterie-Spannung (Volt)</div>
<div class="t" style="left:1532.00px;width:400px;text-align:center;top:745.75px;font-size:13.14px;line-height:16px;color:#d8d9da;font-weight:normal;-webkit-text-stroke:0.25px;">EPSOLAR-Temperatur (Celsius)</div>
<div class="t" style="left:-29.00px;width:400px;text-align:center;top:985.75px;font-size:13.14px;line-height:16px;color:#d8d9da;font-weight:normal;-webkit-text-stroke:0.25px;">Solar Produktion gesamt (Seit 11/2016)</div>
<div class="t" style="left:283.00px;width:400px;text-align:center;top:985.75px;font-size:13.14px;line-height:16px;color:#d8d9da;font-weight:normal;-webkit-text-stroke:0.25px;">Solar Produktion in diesem Jahr</div>
<div class="t" style="left:595.00px;width:400px;text-align:center;top:985.75px;font-size:13.14px;line-height:16px;color:#d8d9da;font-weight:normal;-webkit-text-stroke:0.25px;">Solar Produktion in diesem Monat</div>
<div class="t" style="left:908.00px;width:400px;text-align:center;top:985.75px;font-size:13.14px;line-height:16px;color:#d8d9da;font-weight:normal;-webkit-text-stroke:0.25px;">Solar Verbrauch gesamt (Seit 10/2016)</div>
<div class="t" style="left:1220.00px;width:400px;text-align:center;top:985.75px;font-size:13.14px;line-height:16px;color:#d8d9da;font-weight:normal;-webkit-text-stroke:0.25px;">Solar Verbrauch in diesem Jahr</div>
<div class="t" style="left:1532.00px;width:400px;text-align:center;top:985.75px;font-size:13.14px;line-height:16px;color:#d8d9da;font-weight:normal;-webkit-text-stroke:0.25px;">Solar Verbrauch in diesem Monat</div>
<div class="t" style="right:1864.00px;top:167.44px;font-size:10px;line-height:12px;color:#d8d9da;font-weight:normal;-webkit-text-stroke:0.25px;">80 W</div>
<div class="t" style="right:1864.00px;top:233.44px;font-size:10px;line-height:12px;color:#d8d9da;font-weight:normal;-webkit-text-stroke:0.25px;">60 W</div>
<div class="t" style="right:1864.00px;top:298.44px;font-size:10px;line-height:12px;color:#d8d9da;font-weight:normal;-webkit-text-stroke:0.25px;">40 W</div>
<div class="t" style="right:1864.00px;top:364.44px;font-size:10px;line-height:12px;color:#d8d9da;font-weight:normal;-webkit-text-stroke:0.25px;">20 W</div>
<div class="t" style="right:1864.00px;top:429.44px;font-size:10px;line-height:12px;color:#d8d9da;font-weight:normal;-webkit-text-stroke:0.25px;">0 W</div>
<div class="t" style="left:-28.40px;width:400px;text-align:center;top:442.44px;font-size:10px;line-height:12px;color:#d8d9da;font-weight:normal;-webkit-text-stroke:0.25px;">3/26 00:00</div>
<div class="t" style="left:94.60px;width:400px;text-align:center;top:442.44px;font-size:10px;line-height:12px;color:#d8d9da;font-weight:normal;-webkit-text-stroke:0.25px;">3/27 00:00</div>
<div class="t" style="left:216.60px;width:400px;text-align:center;top:442.44px;font-size:10px;line-height:12px;color:#d8d9da;font-weight:normal;-webkit-text-stroke:0.25px;">3/28 00:00</div>
<div class="t" style="left:338.60px;width:400px;text-align:center;top:442.44px;font-size:10px;line-height:12px;color:#d8d9da;font-weight:normal;-webkit-text-stroke:0.25px;">3/29 00:00</div>
<div class="t" style="left:460.60px;width:400px;text-align:center;top:442.44px;font-size:10px;line-height:12px;color:#d8d9da;font-weight:normal;-webkit-text-stroke:0.25px;">3/30 01:00</div>
<div class="t" style="left:582.60px;width:400px;text-align:center;top:442.44px;font-size:10px;line-height:12px;color:#d8d9da;font-weight:normal;-webkit-text-stroke:0.25px;">3/31 01:00</div>
<div class="t" style="left:704.60px;width:400px;text-align:center;top:442.44px;font-size:10px;line-height:12px;color:#d8d9da;font-weight:normal;-webkit-text-stroke:0.25px;">4/1 01:00</div>
<div class="t" style="left:58.00px;top:465.37px;font-size:11.06px;line-height:13px;color:#d8d9da;font-weight:normal;-webkit-text-stroke:0.25px;">PV-array-power.last  Max: 73 W  Current: 0 W</div>
<div class="t" style="right:930.00px;top:167.44px;font-size:10px;line-height:12px;color:#d8d9da;font-weight:normal;-webkit-text-stroke:0.25px;">25 V</div>
<div class="t" style="right:930.00px;top:220.44px;font-size:10px;line-height:12px;color:#d8d9da;font-weight:normal;-webkit-text-stroke:0.25px;">20 V</div>
<div class="t" style="right:930.00px;top:272.44px;font-size:10px;line-height:12px;color:#d8d9da;font-weight:normal;-webkit-text-stroke:0.25px;">15 V</div>
<div class="t" style="right:930.00px;top:324.44px;font-size:10px;line-height:12px;color:#d8d9da;font-weight:normal;-webkit-text-stroke:0.25px;">10 V</div>
<div class="t" style="right:930.00px;top:377.44px;font-size:10px;line-height:12px;color:#d8d9da;font-weight:normal;-webkit-text-stroke:0.25px;">5 V</div>
<div class="t" style="right:930.00px;top:429.44px;font-size:10px;line-height:12px;color:#d8d9da;font-weight:normal;-webkit-text-stroke:0.25px;">0 V</div>
<div class="t" style="left:906.60px;width:400px;text-align:center;top:442.44px;font-size:10px;line-height:12px;color:#d8d9da;font-weight:normal;-webkit-text-stroke:0.25px;">3/26 00:00</div>
<div class="t" style="left:1029.60px;width:400px;text-align:center;top:442.44px;font-size:10px;line-height:12px;color:#d8d9da;font-weight:normal;-webkit-text-stroke:0.25px;">3/27 00:00</div>
<div class="t" style="left:1151.60px;width:400px;text-align:center;top:442.44px;font-size:10px;line-height:12px;color:#d8d9da;font-weight:normal;-webkit-text-stroke:0.25px;">3/28 00:00</div>
<div class="t" style="left:1274.60px;width:400px;text-align:center;top:442.44px;font-size:10px;line-height:12px;color:#d8d9da;font-weight:normal;-webkit-text-stroke:0.25px;">3/29 00:00</div>
<div class="t" style="left:1396.60px;width:400px;text-align:center;top:442.44px;font-size:10px;line-height:12px;color:#d8d9da;font-weight:normal;-webkit-text-stroke:0.25px;">3/30 01:00</div>
<div class="t" style="left:1519.60px;width:400px;text-align:center;top:442.44px;font-size:10px;line-height:12px;color:#d8d9da;font-weight:normal;-webkit-text-stroke:0.25px;">3/31 01:00</div>
<div class="t" style="left:1641.60px;width:400px;text-align:center;top:442.44px;font-size:10px;line-height:12px;color:#d8d9da;font-weight:normal;-webkit-text-stroke:0.25px;">4/1 01:00</div>
<div class="t" style="left:995.00px;top:465.37px;font-size:11.06px;line-height:13px;color:#d8d9da;font-weight:normal;-webkit-text-stroke:0.25px;">PV-array-voltage.last  Current: 0 V</div>
<div class="t" style="right:1547.00px;top:527.43px;font-size:10px;line-height:12px;color:#d8d9da;font-weight:normal;-webkit-text-stroke:0.25px;">15.0 V</div>
<div class="t" style="right:1547.00px;top:575.43px;font-size:10px;line-height:12px;color:#d8d9da;font-weight:normal;-webkit-text-stroke:0.25px;">14.0 V</div>
<div class="t" style="right:1547.00px;top:622.43px;font-size:10px;line-height:12px;color:#d8d9da;font-weight:normal;-webkit-text-stroke:0.25px;">13.0 V</div>
<div class="t" style="right:1547.00px;top:669.43px;font-size:10px;line-height:12px;color:#d8d9da;font-weight:normal;-webkit-text-stroke:0.25px;">12.0 V</div>
<div class="t" style="left:249.60px;width:400px;text-align:center;top:682.53px;font-size:10px;line-height:12px;color:#d8d9da;font-weight:normal;-webkit-text-stroke:0.25px;">3/26</div>
<div class="t" style="left:327.60px;width:400px;text-align:center;top:682.53px;font-size:10px;line-height:12px;color:#d8d9da;font-weight:normal;-webkit-text-stroke:0.25px;">3/27</div>
<div class="t" style="left:405.60px;width:400px;text-align:center;top:682.53px;font-size:10px;line-height:12px;color:#d8d9da;font-weight:normal;-webkit-text-stroke:0.25px;">3/28</div>
<div class="t" style="left:484.60px;width:400px;text-align:center;top:682.53px;font-size:10px;line-height:12px;color:#d8d9da;font-weight:normal;-webkit-text-stroke:0.25px;">3/29</div>
<div class="t" style="left:562.60px;width:400px;text-align:center;top:682.53px;font-size:10px;line-height:12px;color:#d8d9da;font-weight:normal;-webkit-text-stroke:0.25px;">3/30</div>
<div class="t" style="left:640.60px;width:400px;text-align:center;top:682.53px;font-size:10px;line-height:12px;color:#d8d9da;font-weight:normal;-webkit-text-stroke:0.25px;">3/31</div>
<div class="t" style="left:719.60px;width:400px;text-align:center;top:682.53px;font-size:10px;line-height:12px;color:#d8d9da;font-weight:normal;-webkit-text-stroke:0.25px;">4/1</div>
<div class="t" style="left:370.00px;top:705.37px;font-size:11.06px;line-height:13px;color:#d8d9da;font-weight:normal;-webkit-text-stroke:0.25px;">Battery-voltage.last  Min: 12.48 V  Max: 14.73 V  Current: 12.66 V</div>
<div class="t" style="right:927.00px;top:527.43px;font-size:10px;line-height:12px;color:#d8d9da;font-weight:normal;-webkit-text-stroke:0.25px;">20 W</div>
<div class="t" style="right:927.00px;top:563.43px;font-size:10px;line-height:12px;color:#d8d9da;font-weight:normal;-webkit-text-stroke:0.25px;">15 W</div>
<div class="t" style="right:927.00px;top:598.43px;font-size:10px;line-height:12px;color:#d8d9da;font-weight:normal;-webkit-text-stroke:0.25px;">10 W</div>
<div class="t" style="right:927.00px;top:634.43px;font-size:10px;line-height:12px;color:#d8d9da;font-weight:normal;-webkit-text-stroke:0.25px;">5 W</div>
<div class="t" style="right:927.00px;top:669.43px;font-size:10px;line-height:12px;color:#d8d9da;font-weight:normal;-webkit-text-stroke:0.25px;">0 W</div>
<div class="t" style="left:869.70px;width:400px;text-align:center;top:682.53px;font-size:10px;line-height:12px;color:#d8d9da;font-weight:normal;-webkit-text-stroke:0.25px;">3/26</div>
<div class="t" style="left:949.70px;width:400px;text-align:center;top:682.53px;font-size:10px;line-height:12px;color:#d8d9da;font-weight:normal;-webkit-text-stroke:0.25px;">3/27</div>
<div class="t" style="left:1028.70px;width:400px;text-align:center;top:682.53px;font-size:10px;line-height:12px;color:#d8d9da;font-weight:normal;-webkit-text-stroke:0.25px;">3/28</div>
<div class="t" style="left:1107.70px;width:400px;text-align:center;top:682.53px;font-size:10px;line-height:12px;color:#d8d9da;font-weight:normal;-webkit-text-stroke:0.25px;">3/29</div>
<div class="t" style="left:1186.70px;width:400px;text-align:center;top:682.53px;font-size:10px;line-height:12px;color:#d8d9da;font-weight:normal;-webkit-text-stroke:0.25px;">3/30</div>
<div class="t" style="left:1265.70px;width:400px;text-align:center;top:682.53px;font-size:10px;line-height:12px;color:#d8d9da;font-weight:normal;-webkit-text-stroke:0.25px;">3/31</div>
<div class="t" style="left:1345.70px;width:400px;text-align:center;top:682.53px;font-size:10px;line-height:12px;color:#d8d9da;font-weight:normal;-webkit-text-stroke:0.25px;">4/1</div>
<div class="t" style="left:995.00px;top:705.37px;font-size:11.06px;line-height:13px;color:#d8d9da;font-weight:normal;-webkit-text-stroke:0.25px;">Load-power.last  Min: 5 W  Max: 16 W  Avg: 7 W  Current: 7 W</div>
<div class="t" style="right:1854.50px;top:767.43px;font-size:10px;line-height:12px;color:#d8d9da;font-weight:normal;-webkit-text-stroke:0.25px;">15.0 °C</div>
<div class="t" style="right:1854.50px;top:815.43px;font-size:10px;line-height:12px;color:#d8d9da;font-weight:normal;-webkit-text-stroke:0.25px;">10.0 °C</div>
<div class="t" style="right:1854.50px;top:862.43px;font-size:10px;line-height:12px;color:#d8d9da;font-weight:normal;-webkit-text-stroke:0.25px;">5.0 °C</div>
<div class="t" style="right:1854.50px;top:909.43px;font-size:10px;line-height:12px;color:#d8d9da;font-weight:normal;-webkit-text-stroke:0.25px;">0 °C</div>
<div class="t" style="left:-66.40px;width:400px;text-align:center;top:922.53px;font-size:10px;line-height:12px;color:#d8d9da;font-weight:normal;-webkit-text-stroke:0.25px;">3/27</div>
<div class="t" style="left:-0.40px;width:400px;text-align:center;top:922.53px;font-size:10px;line-height:12px;color:#d8d9da;font-weight:normal;-webkit-text-stroke:0.25px;">3/29</div>
<div class="t" style="left:65.60px;width:400px;text-align:center;top:922.53px;font-size:10px;line-height:12px;color:#d8d9da;font-weight:normal;-webkit-text-stroke:0.25px;">3/31</div>
<div class="t" style="left:58.00px;top:945.37px;font-size:11.06px;line-height:13px;color:#d8d9da;font-weight:normal;-webkit-text-stroke:0.25px;">Battery-temperature.last  Current: 7 °C</div>
<div class="t" style="right:293.70px;top:767.43px;font-size:10px;line-height:12px;color:#d8d9da;font-weight:normal;-webkit-text-stroke:0.25px;">20.0 °C</div>
<div class="t" style="right:293.70px;top:803.43px;font-size:10px;line-height:12px;color:#d8d9da;font-weight:normal;-webkit-text-stroke:0.25px;">15.0 °C</div>
<div class="t" style="right:293.70px;top:838.43px;font-size:10px;line-height:12px;color:#d8d9da;font-weight:normal;-webkit-text-stroke:0.25px;">10.0 °C</div>
<div class="t" style="right:293.70px;top:874.43px;font-size:10px;line-height:12px;color:#d8d9da;font-weight:normal;-webkit-text-stroke:0.25px;">5.0 °C</div>
<div class="t" style="right:293.70px;top:909.43px;font-size:10px;line-height:12px;color:#d8d9da;font-weight:normal;-webkit-text-stroke:0.25px;">0 °C</div>
<div class="t" style="left:1494.60px;width:400px;text-align:center;top:922.53px;font-size:10px;line-height:12px;color:#d8d9da;font-weight:normal;-webkit-text-stroke:0.25px;">3/27</div>
<div class="t" style="left:1560.60px;width:400px;text-align:center;top:922.53px;font-size:10px;line-height:12px;color:#d8d9da;font-weight:normal;-webkit-text-stroke:0.25px;">3/29</div>
<div class="t" style="left:1626.60px;width:400px;text-align:center;top:922.53px;font-size:10px;line-height:12px;color:#d8d9da;font-weight:normal;-webkit-text-stroke:0.25px;">3/31</div>
<div class="t" style="left:1619.00px;top:945.37px;font-size:11.06px;line-height:13px;color:#d8d9da;font-weight:normal;-webkit-text-stroke:0.25px;">Charger-temperature.last  Current: 7 °C</div>
<div class="t" style="left:-28.70px;width:400px;text-align:center;top:652.76px;font-size:36.2px;line-height:43px;color:#d8d9da;font-weight:bold;">0 W</div>
<div class="t" style="left:1532.30px;width:400px;text-align:center;top:652.76px;font-size:36.2px;line-height:43px;color:#d8d9da;font-weight:bold;">0.59 A</div>
<div class="t" style="left:283.50px;width:400px;text-align:center;top:892.76px;font-size:36.2px;line-height:43px;color:#d8d9da;font-weight:bold;">0 A</div>
<div class="t" style="left:1220.50px;width:400px;text-align:center;top:892.76px;font-size:36.2px;line-height:43px;color:#d8d9da;font-weight:bold;">12.66 V</div>
<div class="t" style="left:595.20px;width:400px;text-align:center;top:837.30px;font-size:43px;line-height:52px;color:#d8d9da;font-weight:bold;">0.24 kW</div>
<div class="t" style="left:908.20px;width:400px;text-align:center;top:837.30px;font-size:43px;line-height:52px;color:#d8d9da;font-weight:bold;">0.16 kW</div>
<div class="t" style="left:-28.70px;width:400px;text-align:center;top:1017.40px;font-size:43px;line-height:52px;color:#d8d9da;font-weight:bold;">257.61 kW</div>
<div class="t" style="left:283.30px;width:400px;text-align:center;top:1017.40px;font-size:43px;line-height:52px;color:#d8d9da;font-weight:bold;">8.17 kW</div>
<div class="t" style="left:595.30px;width:400px;text-align:center;top:1017.40px;font-size:43px;line-height:52px;color:#d8d9da;font-weight:bold;">4.51 kW</div>
<div class="t" style="left:908.30px;width:400px;text-align:center;top:1017.40px;font-size:43px;line-height:52px;color:#d8d9da;font-weight:bold;">182.16 kW</div>
<div class="t" style="left:1220.30px;width:400px;text-align:center;top:1017.40px;font-size:43px;line-height:52px;color:#d8d9da;font-weight:bold;">4.28 kW</div>
<div class="t" style="left:1532.30px;width:400px;text-align:center;top:1017.40px;font-size:43px;line-height:52px;color:#d8d9da;font-weight:bold;">3.24 kW</div>
<div class="t" style="left:751.40px;width:400px;text-align:center;top:59.80px;font-size:13px;line-height:16px;color:#e3e3e4;font-weight:normal;-webkit-text-stroke:0.25px;">01-04-2020</div>
<div class="t" style="left:751.20px;width:400px;text-align:center;top:75.64px;font-size:25px;line-height:30px;color:#e9e9ea;font-weight:normal;">02:12:34</div>
<svg style="position:absolute;left:8px;top:6px" width="44" height="42" viewBox="0 0 1131 1080"><defs><linearGradient id="lg" x1="0" y1="0" x2="0" y2="1"><stop offset="0.1" stop-color="#f0592a"/><stop offset="0.4" stop-color="#f2701f"/><stop offset="0.65" stop-color="#f7981b"/><stop offset="1" stop-color="#fdd20b"/></linearGradient></defs><polygon points="550,118 615,190 720,218 805,200 808,285 868,375 905,510 858,505 862,600 885,705 760,760 690,930 600,875 470,860 335,895 320,770 255,700 145,605 240,500 255,400 225,260 330,235 420,245 480,205" fill="url(#lg)" stroke="url(#lg)" stroke-width="6" stroke-linejoin="round"/><path d="M 812 492 C 785 405 700 345 610 345 C 500 345 415 430 415 540 C 415 650 490 725 590 725 C 650 725 700 690 705 640" fill="none" stroke="#222326" stroke-width="96" stroke-linecap="butt"/><path d="M 815 455 L 890 560" stroke="#222326" stroke-width="30" fill="none"/><circle cx="628" cy="568" r="112" fill="#222326"/><path d="M 498 560 C 500 625 560 668 640 655" fill="none" stroke="#f59c1a" stroke-width="30" stroke-linecap="round"/></svg><svg style="position:absolute;left:63px;top:16px" width="24" height="24" viewBox="0 0 24 24"><defs><linearGradient id="gg" x1="0" y1="0" x2="0" y2="1"><stop offset="0" stop-color="#b9b9b9"/><stop offset="1" stop-color="#a2a2a2"/></linearGradient></defs><rect x="0.8" y="0.9" width="10.4" height="10.2" rx="1.6" fill="url(#gg)"/><rect x="12.2" y="0.9" width="10.4" height="10.2" rx="1.6" fill="url(#gg)"/><rect x="0.8" y="12.1" width="10.4" height="10.2" rx="1.6" fill="url(#gg)"/><rect x="12.2" y="12.1" width="10.4" height="10.2" rx="1.6" fill="url(#gg)"/></svg><div class="t" style="left:97.3px;top:16.2px;font-size:18.15px;line-height:22px;color:#d3d4d5">Perles Insel-Solaranlage</div><svg style="position:absolute;left:299.5px;top:26px" width="12" height="8" viewBox="0 0 12 8"><path d="M1.6 1.6 L9.4 1.6 L5.5 5.6 Z" fill="#cfd0d1"/></svg><div class="b" style="left:1425px;top:12px;width:38px;height:30.5px"></div><div class="b" style="left:1466px;top:12px;width:39px;height:30.5px"></div><div class="b" style="left:1522px;top:12px;width:20px;height:31.5px"></div><div class="b" style="left:1545px;top:12px;width:39px;height:31.5px"></div><div class="b" style="left:1587px;top:12px;width:20px;height:31.5px"></div><div class="b" style="left:1624px;top:12px;width:224px;height:30.5px"></div><div class="b" style="left:1851px;top:12px;width:38px;height:30.5px"></div><svg style="position:absolute;left:1436px;top:19px" width="16" height="16" viewBox="0 0 16 16"><polygon points="8.00,1.40 9.79,6.13 14.85,6.38 10.90,9.54 12.23,14.42 8.00,11.65 3.77,14.42 5.10,9.54 1.15,6.38 6.21,6.13" fill="none" stroke="#8e8e8e" stroke-width="1.6" stroke-linejoin="round"/></svg><svg style="position:absolute;left:1477px;top:18px" width="18" height="16" viewBox="0 0 18 16"><path d="M9.2 3.4 H4.2 Q2 3.4 2 5.6 V11.8 Q2 14 4.2 14 H10.8 Q13 14 13 11.8 V10" fill="none" stroke="#8e8e8e" stroke-width="1.7"/><path d="M4.9 13.0 C3.7 10.6 3.4 8.4 4.0 6.8 C5.0 4.2 8.3 3.3 12.0 3.3 V0.2 L17.4 5.3 L12.0 10.4 V7.6 C9.6 7.6 7.8 8.1 6.9 9.8 C6.3 11 6.0 12 5.8 13.0 Z" fill="#8e8e8e" stroke="#2b2b2e" stroke-width="1.0"/></svg><svg style="position:absolute;left:1526.6px;top:20px" width="12" height="16" viewBox="0 0 12 16"><path d="M9.2 2.6 L3.6 8.6 L9.2 14.6" fill="none" stroke="#8e8e8e" stroke-width="3.1"/></svg><svg style="position:absolute;left:1591px;top:20px" width="12" height="16" viewBox="0 0 12 16"><path d="M3 2.6 L8.6 8.6 L3 14.6" fill="none" stroke="#8e8e8e" stroke-width="3.1"/></svg><svg style="position:absolute;left:1556px;top:19px" width="18" height="18" viewBox="0 0 18 18"><circle cx="7.5" cy="7.6" r="5.2" fill="none" stroke="#8e8e8e" stroke-width="2.5"/><path d="M11.2 11.4 L15.2 15.5" stroke="#8e8e8e" stroke-width="2.8" stroke-linecap="round"/><path d="M4.8 7.6 H10.2" stroke="#8e8e8e" stroke-width="1.9"/></svg><svg style="position:absolute;left:1635px;top:19px" width="16" height="16" viewBox="0 0 16 16"><circle cx="8" cy="8.1" r="6.1" fill="none" stroke="#8e8e8e" stroke-width="1.9"/><path d="M8.5 4.6 V8.9 H5.6" fill="none" stroke="#8e8e8e" stroke-width="1.5"/></svg><div class="t" style="left:1653.5px;top:20.3px;font-size:13px;line-height:16px;color:#969696;-webkit-text-stroke:0.2px">Last 7 days</div><div class="t" style="left:1730.6px;top:20.3px;font-size:13px;line-height:16px;color:#f7941e;-webkit-text-stroke:0.2px">Refresh every 10s</div><svg style="position:absolute;left:1862px;top:19px" width="16" height="16" viewBox="0 0 16 16"><path d="M2.4 7.0 A5.7 5.7 0 0 1 12.4 4.4" fill="none" stroke="#8e8e8e" stroke-width="2.7"/><path d="M14.6 1.6 V7.0 H9.2 Z" fill="#8e8e8e"/><path d="M13.6 9.2 A5.7 5.7 0 0 1 3.6 11.8" fill="none" stroke="#8e8e8e" stroke-width="2.7"/><path d="M1.4 15.4 V9.2 H7.6 Z" fill="#8e8e8e"/></svg>
</div>
<div id="sb"></div><div id="th"></div>
<svg style="position:absolute;left:1903px;top:55px" width="17" height="1023" viewBox="0 0 17 1023"><path d="M4 24.4 L8.6 19.4 L13.2 24.4" fill="none" stroke="#505050" stroke-width="2.9"/><path d="M4 999.2 L8.6 1004.2 L13.2 999.2" fill="none" stroke="#505050" stroke-width="2.9"/></svg>
<div id="tl"></div><div id="vl"></div><div id="bl"></div><div id="wl"></div>
</div>
</body></html>
